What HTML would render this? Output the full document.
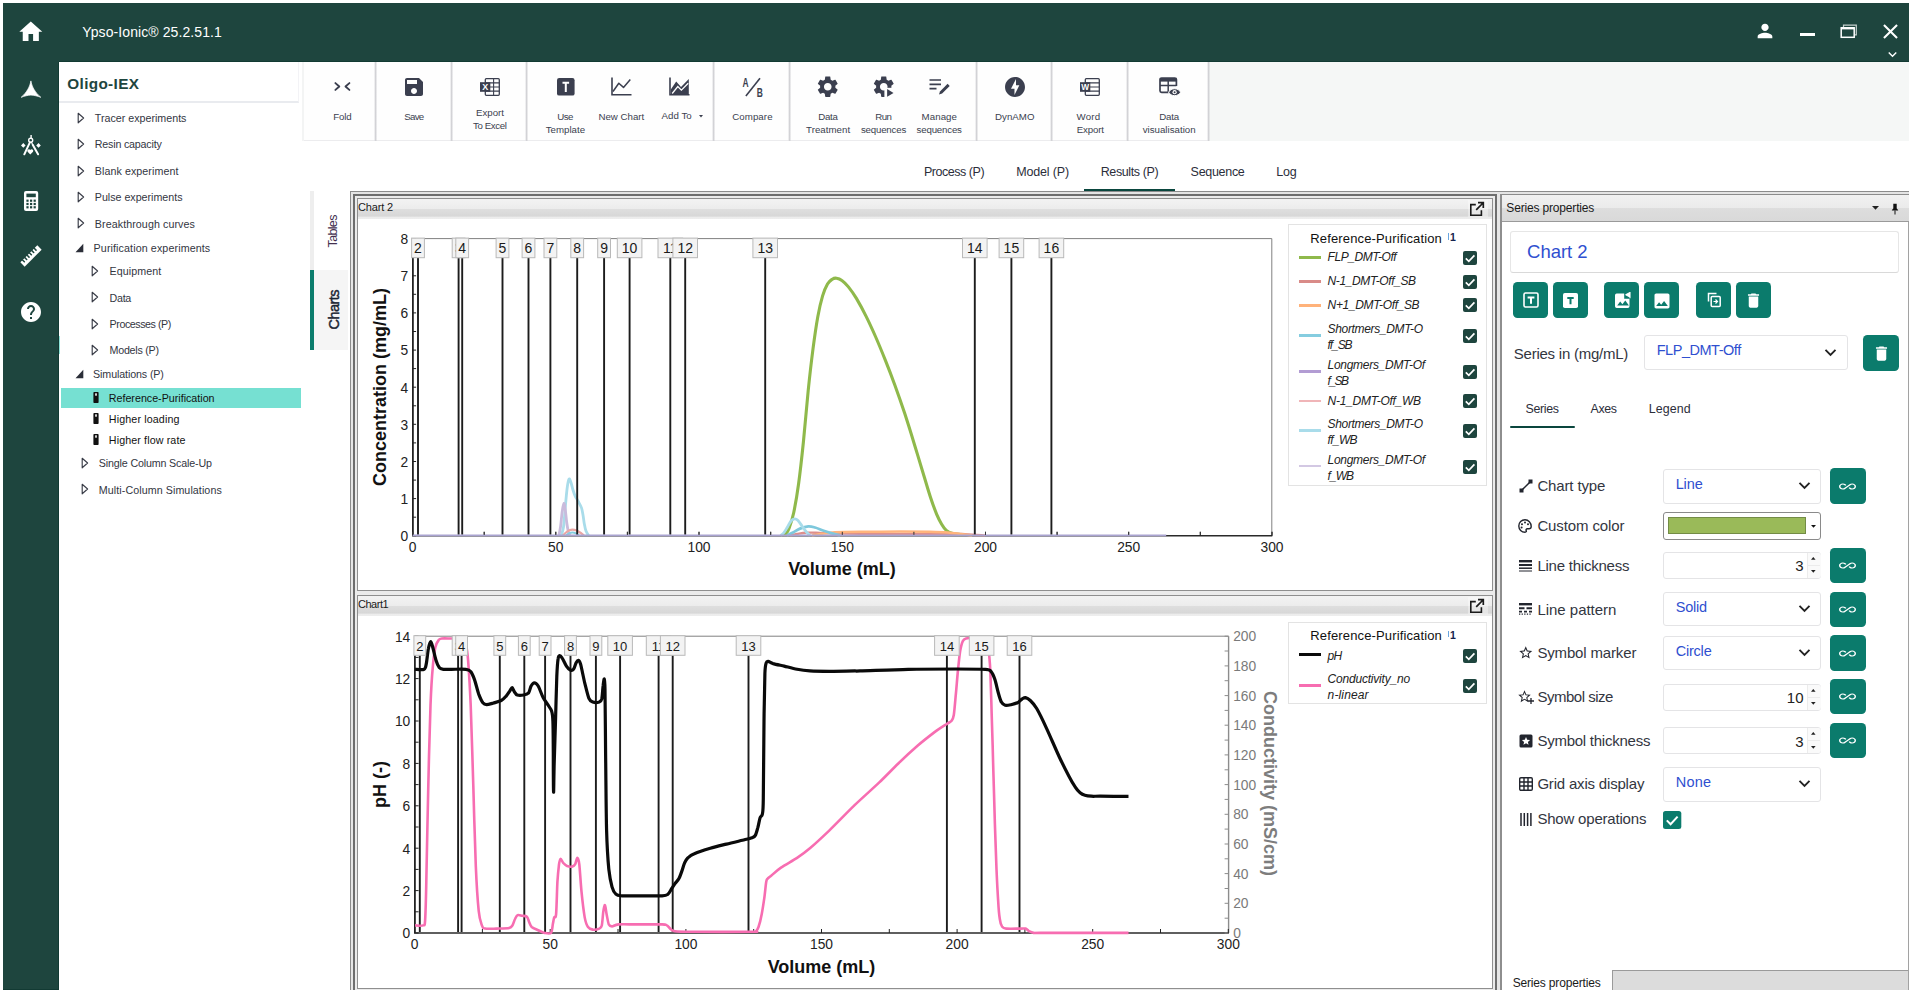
<!DOCTYPE html>
<html lang="en"><head><meta charset="utf-8"><title>Ypso-Ionic</title>
<style>
html,body{margin:0;padding:0;background:#fff;}
body{width:1912px;height:996px;position:relative;overflow:hidden;font-family:"Liberation Sans",sans-serif;}
.a{position:absolute;display:block;}
.t{white-space:nowrap;}
svg{overflow:visible;}
</style></head><body>
<div class="a" style="left:3px;top:3px;width:1906px;height:58.5px;background:#1e453e;border-bottom:1px solid #123a33;box-sizing:border-box;"></div>
<div class="a" style="left:3px;top:3px;width:55.7px;height:987px;background:#1e453e;border-bottom:1px solid #123a33;box-sizing:border-box;"></div>
<div class="a" style="left:57.7px;top:62px;width:1px;height:928px;background:#123a33;"></div>
<div class="a t" style="left:82.30px;top:23.00px;line-height:18px;font-size:14px;color:#fff;letter-spacing:0.091px;">Ypso-Ionic® 25.2.51.1</div>
<svg class="a" style="left:16.9px;top:17.599999999999998px;" width="27.6" height="27.6" viewBox="0 0 24 24"><path fill="#fff" d="M10 20v-6h4v6h5v-8h3L12 3 2 12h3v8z"/></svg>
<svg class="a" style="left:19px;top:78px;" width="24" height="22" viewBox="0 0 24 22"><path fill="#fff" stroke="#fff" stroke-width="0.700" stroke-linejoin="round" d="M11.900 2.900 C12.900 8.500 15.600 14 21.800 19.300 C18 18 15 17.200 11.900 17.100 C8.800 17.200 5.800 18 2.200 19.300 C8.200 14 10.900 8.500 11.900 2.900z"/></svg>
<svg class="a" style="left:19px;top:133px;" width="24" height="26" viewBox="0 0 24 26"><g fill="none" stroke="#fff" stroke-linecap="round"><path d="M10.900 9.300 L5.300 21.300" stroke-width="2"/><path d="M13.700 11.800 L19.100 21.300" stroke-width="2"/><path d="M12.500 9.200L13.700 11.800" stroke-width="1.200"/></g>
<circle cx="11.700" cy="7.200" r="2" fill="none" stroke="#fff" stroke-width="1.400"/><path d="M12.100 2v3.200" stroke="#fff" stroke-width="1.400"/>
<path fill="#fff" d="M4.300 10.100l2.300 2.300-2.300 2.300-2.300-2.300z M19.500 10.100l2.300 2.300-2.300 2.300-2.300-2.300z M11.300 21.500l-2.700-2.700a1.500 1.500 0 0 1 2.700-1.700a1.500 1.500 0 0 1 2.700 1.700z"/></svg>
<svg class="a" style="left:23.7px;top:190.7px;" width="14.2" height="20" viewBox="0 0 14.2 20"><rect x="0" y="0" width="14.200" height="20" rx="2" fill="#fff"/><rect x="2.400" y="2.600" width="9.400" height="3.600" fill="#1e453e"/>
<g fill="#1e453e"><rect x="2.400" y="8.600" width="2.200" height="2.200"/><rect x="6" y="8.600" width="2.200" height="2.200"/><rect x="9.600" y="8.600" width="2.200" height="2.200"/>
<rect x="2.400" y="11.900" width="2.200" height="2.200"/><rect x="6" y="11.900" width="2.200" height="2.200"/><rect x="9.600" y="11.900" width="2.200" height="2.200"/>
<rect x="2.400" y="15.200" width="2.200" height="2.200"/><rect x="6" y="15.200" width="2.200" height="2.200"/><rect x="9.600" y="15.200" width="2.200" height="2.200"/></g></svg>
<svg class="a" style="left:17.85px;top:243.3px;" width="26" height="26" viewBox="0 0 26 26"><g transform="rotate(-45 13 13)"><rect x="1" y="9.950" width="24" height="6.100" fill="#fff"/>
<g stroke="#1e453e" stroke-width="1.500" stroke-linecap="round"><path d="M4.200 9.800v2.600M7.500 9.800v2.600M10.800 9.800v2.600M14.100 9.800v2.600M17.400 9.800v2.600M20.700 9.800v2.600"/></g></g></svg>
<svg class="a" style="left:18.9px;top:299.9px;" width="24" height="24" viewBox="0 0 24 24"><path fill="#fff" d="M12 2C6.48 2 2 6.48 2 12s4.48 10 10 10 10-4.48 10-10S17.52 2 12 2zm1 17h-2v-2h2v2zm2.07-7.75l-.9.92C13.45 12.9 13 13.5 13 15h-2v-.5c0-1.1.45-2.1 1.17-2.83l1.24-1.26c.37-.36.59-.86.59-1.41 0-1.1-.9-2-2-2s-2 .9-2 2H8c0-2.21 1.79-4 4-4s4 1.79 4 4c0 .88-.36 1.68-.93 2.25z"/></svg>
<svg class="a" style="left:1754.0px;top:20.0px;" width="22" height="22" viewBox="0 0 24 24"><path fill="#fff" d="M12 12c2.21 0 4-1.79 4-4s-1.79-4-4-4-4 1.79-4 4 1.79 4 4 4zm0 2c-2.67 0-8 1.34-8 4v2h16v-2c0-2.66-5.33-4-8-4z"/></svg>
<div class="a" style="left:1800px;top:33px;width:15px;height:3px;background:#fff;"></div>
<svg class="a" style="left:1840px;top:22px;" width="18" height="17" viewBox="0 0 18 17"><g fill="none" stroke="#fff"><path d="M3.500 5V3.200H16.300V12.800H14.500" stroke-width="1.200" opacity=".75"/><rect x="1.200" y="5.800" width="13" height="9.500" stroke-width="1.500"/><path d="M1 6.300h13.400" stroke-width="2.200"/></g></svg>
<svg class="a" style="left:1878.0px;top:18.5px;" width="25" height="25" viewBox="0 0 24 24"><path fill="#fff" d="M19 6.41L17.59 5 12 10.59 6.41 5 5 6.41 10.59 12 5 17.59 6.41 19 12 13.41 17.59 19 19 17.59 13.41 12z"/></svg>
<svg class="a" style="left:1883.9px;top:45.5px;" width="17" height="17" viewBox="0 0 24 24"><path fill="#fff" d="M16.59 8.59L12 13.17 7.41 8.59 6 10l6 6 6-6z"/></svg>
<div class="a" style="left:59px;top:62px;width:239px;height:928px;background:#fff;"></div>
<div class="a" style="left:59px;top:62px;width:239.5px;height:40.5px;background:#fff;border-right:1.500px solid #f3f3f6;border-bottom:2px solid #e9ebef;box-sizing:border-box;"></div>
<div class="a t" style="left:67.30px;top:73.60px;line-height:20px;font-size:15.3px;color:#1e453e;font-weight:700;letter-spacing:0.344px;">Oligo-IEX</div>
<div class="a" style="left:58.6px;top:336px;width:1.6px;height:18px;background:#8fe3d8;"></div>
<svg class="a" style="left:76.6px;top:112.0px;" width="8" height="12" viewBox="0 0 8 12"><path d="M1.200 1.200 L6.600 6 L1.200 10.800z" fill="none" stroke="#3a3d48" stroke-width="1.150" stroke-linejoin="round"/></svg>
<div class="a t" style="left:94.80px;top:111.39px;line-height:14px;font-size:10.7px;color:#33363f;">Tracer experiments</div>
<svg class="a" style="left:76.6px;top:138.1px;" width="8" height="12" viewBox="0 0 8 12"><path d="M1.200 1.200 L6.600 6 L1.200 10.800z" fill="none" stroke="#3a3d48" stroke-width="1.150" stroke-linejoin="round"/></svg>
<div class="a t" style="left:94.80px;top:137.49px;line-height:14px;font-size:10.7px;color:#33363f;letter-spacing:-0.191px;">Resin capacity</div>
<svg class="a" style="left:76.6px;top:164.6px;" width="8" height="12" viewBox="0 0 8 12"><path d="M1.200 1.200 L6.600 6 L1.200 10.800z" fill="none" stroke="#3a3d48" stroke-width="1.150" stroke-linejoin="round"/></svg>
<div class="a t" style="left:94.80px;top:163.99px;line-height:14px;font-size:10.7px;color:#33363f;letter-spacing:0.069px;">Blank experiment</div>
<svg class="a" style="left:76.6px;top:191.1px;" width="8" height="12" viewBox="0 0 8 12"><path d="M1.200 1.200 L6.600 6 L1.200 10.800z" fill="none" stroke="#3a3d48" stroke-width="1.150" stroke-linejoin="round"/></svg>
<div class="a t" style="left:94.80px;top:190.49px;line-height:14px;font-size:10.7px;color:#33363f;letter-spacing:-0.013px;">Pulse experiments</div>
<svg class="a" style="left:76.6px;top:217.4px;" width="8" height="12" viewBox="0 0 8 12"><path d="M1.200 1.200 L6.600 6 L1.200 10.800z" fill="none" stroke="#3a3d48" stroke-width="1.150" stroke-linejoin="round"/></svg>
<div class="a t" style="left:94.80px;top:216.79px;line-height:14px;font-size:10.7px;color:#33363f;letter-spacing:0.082px;">Breakthrough curves</div>
<svg class="a" style="left:75.1px;top:242.5px;" width="9" height="10" viewBox="0 0 9 10"><path d="M8.300 0.700 V9.200 H0.500z" fill="#2b2e38"/></svg>
<div class="a t" style="left:93.60px;top:240.69px;line-height:14px;font-size:10.7px;color:#33363f;letter-spacing:0.110px;">Purification experiments</div>
<svg class="a" style="left:91.2px;top:264.8px;" width="8" height="12" viewBox="0 0 8 12"><path d="M1.200 1.200 L6.600 6 L1.200 10.800z" fill="none" stroke="#3a3d48" stroke-width="1.150" stroke-linejoin="round"/></svg>
<div class="a t" style="left:109.60px;top:264.19px;line-height:14px;font-size:10.7px;color:#33363f;letter-spacing:0.081px;">Equipment</div>
<svg class="a" style="left:91.2px;top:291.2px;" width="8" height="12" viewBox="0 0 8 12"><path d="M1.200 1.200 L6.600 6 L1.200 10.800z" fill="none" stroke="#3a3d48" stroke-width="1.150" stroke-linejoin="round"/></svg>
<div class="a t" style="left:109.60px;top:290.59px;line-height:14px;font-size:10.7px;color:#33363f;letter-spacing:-0.300px;">Data</div>
<svg class="a" style="left:91.2px;top:317.6px;" width="8" height="12" viewBox="0 0 8 12"><path d="M1.200 1.200 L6.600 6 L1.200 10.800z" fill="none" stroke="#3a3d48" stroke-width="1.150" stroke-linejoin="round"/></svg>
<div class="a t" style="left:109.60px;top:316.99px;line-height:14px;font-size:10.7px;color:#33363f;letter-spacing:-0.449px;">Processes (P)</div>
<svg class="a" style="left:91.2px;top:343.9px;" width="8" height="12" viewBox="0 0 8 12"><path d="M1.200 1.200 L6.600 6 L1.200 10.800z" fill="none" stroke="#3a3d48" stroke-width="1.150" stroke-linejoin="round"/></svg>
<div class="a t" style="left:109.60px;top:343.29px;line-height:14px;font-size:10.7px;color:#33363f;letter-spacing:-0.258px;">Models (P)</div>
<svg class="a" style="left:75.1px;top:369px;" width="9" height="10" viewBox="0 0 9 10"><path d="M8.300 0.700 V9.200 H0.500z" fill="#2b2e38"/></svg>
<div class="a t" style="left:93.10px;top:367.19px;line-height:14px;font-size:10.7px;color:#33363f;letter-spacing:-0.117px;">Simulations (P)</div>
<div class="a" style="left:61px;top:387.7px;width:240px;height:20.7px;background:#76e0d2;"></div>
<svg class="a" style="left:92.6px;top:392.2px;" width="6" height="11" viewBox="0 0 6 11"><rect x="0.400" y="0" width="5.200" height="11" rx="0.800" fill="#111"/><rect x="2.200" y="1.300" width="1.600" height="2.400" fill="#fff"/></svg>
<div class="a t" style="left:108.80px;top:391.29px;line-height:14px;font-size:10.7px;color:#111;">Reference-Purification</div>
<svg class="a" style="left:92.6px;top:413.1px;" width="6" height="11" viewBox="0 0 6 11"><rect x="0.400" y="0" width="5.200" height="11" rx="0.800" fill="#111"/><rect x="2.200" y="1.300" width="1.600" height="2.400" fill="#fff"/></svg>
<div class="a t" style="left:108.80px;top:412.19px;line-height:14px;font-size:10.7px;color:#111;letter-spacing:0.131px;">Higher loading</div>
<svg class="a" style="left:92.6px;top:433.8px;" width="6" height="11" viewBox="0 0 6 11"><rect x="0.400" y="0" width="5.200" height="11" rx="0.800" fill="#111"/><rect x="2.200" y="1.300" width="1.600" height="2.400" fill="#fff"/></svg>
<div class="a t" style="left:108.80px;top:432.89px;line-height:14px;font-size:10.7px;color:#111;letter-spacing:0.118px;">Higher flow rate</div>
<svg class="a" style="left:81.1px;top:457.0px;" width="8" height="12" viewBox="0 0 8 12"><path d="M1.200 1.200 L6.600 6 L1.200 10.800z" fill="none" stroke="#3a3d48" stroke-width="1.150" stroke-linejoin="round"/></svg>
<div class="a t" style="left:98.80px;top:456.39px;line-height:14px;font-size:10.7px;color:#33363f;letter-spacing:-0.155px;">Single Column Scale-Up</div>
<svg class="a" style="left:81.1px;top:483.3px;" width="8" height="12" viewBox="0 0 8 12"><path d="M1.200 1.200 L6.600 6 L1.200 10.800z" fill="none" stroke="#3a3d48" stroke-width="1.150" stroke-linejoin="round"/></svg>
<div class="a t" style="left:98.80px;top:482.69px;line-height:14px;font-size:10.7px;color:#33363f;letter-spacing:0.078px;">Multi-Column Simulations</div>
<div class="a" style="left:302px;top:61.5px;width:1607px;height:79.5px;background:#f5f7f6;"></div>
<div class="a" style="left:303.5px;top:61.5px;width:905px;height:79px;background:#fefefe;border-bottom:1px solid #ececee;box-sizing:border-box;"></div>
<div class="a" style="left:374.2px;top:62px;width:3px;height:78.5px;background:linear-gradient(90deg,rgba(0,0,0,0) 0,#dddde0 35%,#cbcbcf 60%,rgba(0,0,0,0) 100%);"></div>
<div class="a" style="left:449.7px;top:62px;width:3px;height:78.5px;background:linear-gradient(90deg,rgba(0,0,0,0) 0,#dddde0 35%,#cbcbcf 60%,rgba(0,0,0,0) 100%);"></div>
<div class="a" style="left:525.1px;top:62px;width:3px;height:78.5px;background:linear-gradient(90deg,rgba(0,0,0,0) 0,#dddde0 35%,#cbcbcf 60%,rgba(0,0,0,0) 100%);"></div>
<div class="a" style="left:712.1px;top:62px;width:3px;height:78.5px;background:linear-gradient(90deg,rgba(0,0,0,0) 0,#dddde0 35%,#cbcbcf 60%,rgba(0,0,0,0) 100%);"></div>
<div class="a" style="left:787.7px;top:62px;width:3px;height:78.5px;background:linear-gradient(90deg,rgba(0,0,0,0) 0,#dddde0 35%,#cbcbcf 60%,rgba(0,0,0,0) 100%);"></div>
<div class="a" style="left:974.6px;top:62px;width:3px;height:78.5px;background:linear-gradient(90deg,rgba(0,0,0,0) 0,#dddde0 35%,#cbcbcf 60%,rgba(0,0,0,0) 100%);"></div>
<div class="a" style="left:1049.9px;top:62px;width:3px;height:78.5px;background:linear-gradient(90deg,rgba(0,0,0,0) 0,#dddde0 35%,#cbcbcf 60%,rgba(0,0,0,0) 100%);"></div>
<div class="a" style="left:1125.7px;top:62px;width:3px;height:78.5px;background:linear-gradient(90deg,rgba(0,0,0,0) 0,#dddde0 35%,#cbcbcf 60%,rgba(0,0,0,0) 100%);"></div>
<div class="a" style="left:1206.9px;top:62px;width:3px;height:78.5px;background:linear-gradient(90deg,rgba(0,0,0,0) 0,#dddde0 35%,#cbcbcf 60%,rgba(0,0,0,0) 100%);"></div>
<div class="a" style="left:302px;top:62px;width:1.6px;height:78.5px;background:#f3f4f4;"></div>
<div class="a t" style="left:333.15px;top:109.66px;line-height:13px;font-size:9.7px;color:#3b3f4f;letter-spacing:-0.123px;">Fold</div>
<div class="a t" style="left:404.15px;top:109.66px;line-height:13px;font-size:9.7px;color:#3b3f4f;letter-spacing:-0.669px;">Save</div>
<div class="a t" style="left:476.00px;top:105.86px;line-height:13px;font-size:9.7px;color:#3b3f4f;letter-spacing:-0.007px;">Export</div>
<div class="a t" style="left:472.95px;top:119.16px;line-height:13px;font-size:9.7px;color:#3b3f4f;letter-spacing:-0.365px;">To Excel</div>
<div class="a t" style="left:557.30px;top:109.76px;line-height:13px;font-size:9.7px;color:#3b3f4f;letter-spacing:-0.525px;">Use</div>
<div class="a t" style="left:545.70px;top:122.86px;line-height:13px;font-size:9.7px;color:#3b3f4f;letter-spacing:0.006px;">Template</div>
<div class="a t" style="left:598.45px;top:109.66px;line-height:13px;font-size:9.7px;color:#3b3f4f;letter-spacing:0.010px;">New Chart</div>
<div class="a t" style="left:661.40px;top:109.16px;line-height:13px;font-size:9.7px;color:#3b3f4f;letter-spacing:0.076px;">Add To</div>
<svg class="a" style="left:698.5px;top:114.6px;" width="4" height="3" viewBox="0 0 4 3"><path d="M0 0h4L2 2.600z" fill="#3b3f4f"/></svg>
<div class="a t" style="left:732.20px;top:109.66px;line-height:13px;font-size:9.7px;color:#3b3f4f;letter-spacing:0.085px;">Compare</div>
<div class="a t" style="left:818.20px;top:109.76px;line-height:13px;font-size:9.7px;color:#3b3f4f;letter-spacing:-0.229px;">Data</div>
<div class="a t" style="left:806.05px;top:122.86px;line-height:13px;font-size:9.7px;color:#3b3f4f;letter-spacing:0.032px;">Treatment</div>
<div class="a t" style="left:875.20px;top:109.76px;line-height:13px;font-size:9.7px;color:#3b3f4f;letter-spacing:-0.497px;">Run</div>
<div class="a t" style="left:860.90px;top:122.86px;line-height:13px;font-size:9.7px;color:#3b3f4f;letter-spacing:-0.189px;">sequences</div>
<div class="a t" style="left:921.60px;top:109.76px;line-height:13px;font-size:9.7px;color:#3b3f4f;letter-spacing:0.070px;">Manage</div>
<div class="a t" style="left:916.60px;top:122.86px;line-height:13px;font-size:9.7px;color:#3b3f4f;letter-spacing:-0.189px;">sequences</div>
<div class="a t" style="left:995.05px;top:109.66px;line-height:13px;font-size:9.7px;color:#3b3f4f;letter-spacing:0.031px;">DynAMO</div>
<div class="a t" style="left:1076.60px;top:109.76px;line-height:13px;font-size:9.7px;color:#3b3f4f;letter-spacing:0.201px;">Word</div>
<div class="a t" style="left:1076.75px;top:122.86px;line-height:13px;font-size:9.7px;color:#3b3f4f;letter-spacing:-0.147px;">Export</div>
<div class="a t" style="left:1159.20px;top:109.76px;line-height:13px;font-size:9.7px;color:#3b3f4f;letter-spacing:-0.163px;">Data</div>
<div class="a t" style="left:1142.70px;top:122.86px;line-height:13px;font-size:9.7px;color:#3b3f4f;letter-spacing:0.014px;">visualisation</div>
<svg class="a" style="left:333px;top:81px;" width="19" height="11" viewBox="0 0 19 11"><g fill="none" stroke="#3b3f4f" stroke-width="1.900" stroke-linecap="round" stroke-linejoin="round"><path d="M2.400 2.100L6.300 5.500 2.400 8.900"/><path d="M16.400 2.100L12.500 5.500 16.400 8.900"/></g></svg>
<svg class="a" style="left:402.2px;top:74.5px;" width="24" height="24" viewBox="0 0 24 24"><path fill="#3b3f4f" d="M17 3H5c-1.110 0-2 .9-2 2v14c0 1.100.890 2 2 2h14c1.100 0 2-.9 2-2V7l-4-4zm-5 16c-1.660 0-3-1.340-3-3s1.340-3 3-3 3 1.340 3 3-1.340 3-3 3zm3-10H5V5h10v4z"/></svg>
<svg class="a" style="left:480px;top:77.5px;" width="20" height="18" viewBox="0 0 20 18"><rect x="5.300" y="0.700" width="14" height="16.600" rx="1" fill="#fff" stroke="#3b3f4f" stroke-width="1.300"/>
<g stroke="#3b3f4f" stroke-width="1.100"><path d="M5.300 4.900h14M5.300 9h14M5.300 13.100h14"/><path d="M13.600 0.700v16.600"/></g>
<rect x="0" y="4.200" width="10.300" height="9.600" fill="#3b3f4f"/>
<text x="5.150" y="12.300" font-family="Liberation Sans, sans-serif" font-weight="700" font-size="9" text-anchor="middle" fill="#fff">X</text></svg>
<svg class="a" style="left:556.6px;top:77.7px;" width="17.6" height="17.6" viewBox="0 0 17.6 17.6"><rect width="17.600" height="17.600" rx="2.200" fill="#3b3f4f"/><path d="M5.500 3.700h6.600v2h-2.300v8.200h-2V5.700H5.500z" fill="#fff"/></svg>
<svg class="a" style="left:611px;top:77px;" width="21" height="19" viewBox="0 0 21 19"><g fill="none" stroke="#3b3f4f" stroke-width="1.500"><path d="M1 0.500V17.800H20.500" stroke-width="1.600"/><path d="M2 14.500L7.800 6.200 12.500 10.400 19.300 2.400" stroke-linejoin="round"/></g></svg>
<svg class="a" style="left:669px;top:77px;" width="21" height="19" viewBox="0 0 21 19"><path d="M1 0.500V17.800H20.500" fill="none" stroke="#3b3f4f" stroke-width="1.600"/><path d="M1.800 17.800V12.500L7.200 4.500l4.800 5.400 7.800-8V17.800z" fill="#3b3f4f"/><path d="M3.200 16.500L8.800 9.500l3.600 3.600 6.800-6.800" fill="none" stroke="#fefefe" stroke-width="1.300"/></svg>
<svg class="a" style="left:741.5px;top:75.5px;" width="22" height="22" viewBox="0 0 22 22"><path d="M3.900 19.900L18 2.300" stroke="#3b3f4f" stroke-width="1.600" fill="none"/>
<text transform="translate(0.600,10.800) scale(0.640,1)" font-family="Liberation Sans, sans-serif" font-weight="700" font-size="13.200" fill="#3b3f4f">A</text>
<text transform="translate(14.700,20.800) scale(0.640,1)" font-family="Liberation Sans, sans-serif" font-weight="700" font-size="13.200" fill="#3b3f4f">B</text></svg>
<svg class="a" style="left:815.35px;top:73.75px;" width="25.5" height="25.5" viewBox="0 0 24 24"><path fill="#3b3f4f" d="M19.140 12.940c.040-.300.060-.610.060-.940 0-.320-.020-.640-.070-.940l2.030-1.580c.180-.140.230-.410.120-.610l-1.920-3.320c-.120-.220-.370-.290-.590-.220l-2.390.960c-.500-.380-1.030-.700-1.620-.940l-.360-2.540c-.040-.240-.240-.410-.480-.410h-3.840c-.240 0-.430.170-.470.410l-.360 2.540c-.590.240-1.130.570-1.620.940l-2.390-.960c-.220-.080-.470 0-.590.220L2.740 8.870c-.120.210-.080.470.120.610l2.030 1.580c-.050.300-.090.630-.090.940s.020.640.070.940l-2.030 1.580c-.180.140-.230.410-.120.610l1.920 3.320c.120.220.370.290.590.220l2.390-.960c.500.380 1.030.700 1.620.940l.360 2.540c.050.240.240.410.480.410h3.840c.240 0 .440-.170.470-.410l.360-2.540c.590-.240 1.130-.560 1.620-.940l2.390.960c.220.080.470 0 .590-.220l1.920-3.320c.120-.220.070-.470-.120-.610l-2.010-1.580zM12 15.600c-1.980 0-3.600-1.620-3.600-3.600s1.620-3.600 3.600-3.600 3.600 1.620 3.600 3.600-1.620 3.600-3.600 3.600z"/></svg>
<svg class="a" style="left:870.85px;top:73.75px;" width="25.5" height="25.5" viewBox="0 0 24 24"><path fill="#3b3f4f" d="M19.140 12.940c.040-.300.060-.610.060-.940 0-.320-.020-.640-.070-.940l2.030-1.580c.180-.140.230-.410.120-.610l-1.920-3.320c-.120-.220-.370-.290-.590-.220l-2.390.960c-.500-.380-1.030-.700-1.620-.940l-.360-2.540c-.040-.240-.240-.410-.480-.410h-3.840c-.240 0-.430.170-.470.410l-.360 2.540c-.590.240-1.130.570-1.620.940l-2.390-.960c-.220-.080-.470 0-.590.220L2.740 8.870c-.120.210-.080.470.120.610l2.030 1.580c-.050.300-.090.630-.090.940s.020.640.070.940l-2.030 1.580c-.180.140-.230.410-.120.610l1.920 3.320c.120.220.370.290.590.220l2.390-.960c.500.380 1.030.700 1.620.940l.360 2.540c.050.240.240.410.480.410h3.840c.240 0 .440-.170.470-.410l.360-2.540c.590-.240 1.130-.560 1.620-.940l2.390.960c.220.080.470 0 .590-.220l1.920-3.320c.120-.220.070-.470-.120-.610l-2.010-1.580zM12 15.600c-1.980 0-3.600-1.620-3.600-3.600s1.620-3.600 3.600-3.600 3.600 1.620 3.600 3.600-1.620 3.600-3.600 3.600z"/><rect x="12.600" y="13" width="11" height="10" fill="#fefefe"/><path d="M15.200 14.200v7.200l6-3.600z" fill="#3b3f4f"/></svg>
<svg class="a" style="left:929px;top:78px;" width="21" height="17" viewBox="0 0 21 17"><g stroke="#3b3f4f" stroke-width="1.700" fill="none"><path d="M0.500 2h11.500M0.500 6.300h11.500M0.500 10.600h7"/></g><path d="M10 16.600l1-3.200 7.600-7.600 2.100 2.100-7.600 7.600z" fill="#3b3f4f"/></svg>
<svg class="a" style="left:1002.8px;top:74.5px;" width="24" height="24" viewBox="0 0 24 24"><path fill="#3b3f4f" d="M12 2.020c-5.510 0-9.980 4.470-9.980 9.980s4.470 9.980 9.980 9.980 9.980-4.470 9.980-9.980S17.510 2.020 12 2.020zM11.480 20v-6.260H8L13 4v6.260h3.350L11.480 20z"/></svg>
<svg class="a" style="left:1080.4px;top:77.5px;" width="20" height="18" viewBox="0 0 20 18"><rect x="5.300" y="0.700" width="14" height="16.600" rx="1" fill="#fff" stroke="#3b3f4f" stroke-width="1.300"/>
<g stroke="#3b3f4f" stroke-width="1.100"><path d="M5.300 4.900h14M5.300 9h14M5.300 13.100h14"/></g>
<rect x="0" y="4.200" width="10.300" height="9.600" fill="#3b3f4f"/>
<text x="5.150" y="12.300" font-family="Liberation Sans, sans-serif" font-weight="700" font-size="8.3" text-anchor="middle" fill="#fff">W</text></svg>
<svg class="a" style="left:1159px;top:77px;" width="22" height="20" viewBox="0 0 22 20"><path d="M9.500 15.300H2.600a1.600 1.600 0 0 1-1.600-1.600V2.600A1.600 1.600 0 0 1 2.600 1H15.800a1.600 1.600 0 0 1 1.600 1.600V9" fill="none" stroke="#3b3f4f" stroke-width="1.700"/>
<rect x="1" y="1" width="16.400" height="3.600" fill="#3b3f4f"/><path d="M1 8.600h16.400M9.200 4v11" stroke="#3b3f4f" stroke-width="1.500"/>
<path d="M9.600 15.200c2.200-4.600 9.800-4.600 12 0c-2.200 4.600-9.800 4.600-12 0z" fill="#3b3f4f" stroke="#fefefe" stroke-width="1"/><circle cx="15.600" cy="15.200" r="2.100" fill="#fefefe"/><circle cx="15.600" cy="15.200" r="1" fill="#3b3f4f"/></svg>
<div class="a t" style="left:924.00px;top:163.70px;line-height:16px;font-size:12.5px;color:#2b2e3a;letter-spacing:-0.469px;">Process (P)</div>
<div class="a t" style="left:1016.35px;top:163.70px;line-height:16px;font-size:12.5px;color:#2b2e3a;letter-spacing:-0.185px;">Model (P)</div>
<div class="a t" style="left:1100.70px;top:163.70px;line-height:16px;font-size:12.5px;color:#2b2e3a;letter-spacing:-0.381px;">Results (P)</div>
<div class="a t" style="left:1190.60px;top:163.70px;line-height:16px;font-size:12.5px;color:#2b2e3a;letter-spacing:-0.299px;">Sequence</div>
<div class="a t" style="left:1276.25px;top:163.70px;line-height:16px;font-size:12.5px;color:#2b2e3a;letter-spacing:-0.177px;">Log</div>
<div class="a" style="left:1084.3px;top:188.8px;width:90.4px;height:2.2px;background:#0a463e;"></div>
<div class="a" style="left:310.3px;top:191px;width:3.8px;height:79px;background:#eeeeee;"></div>
<div class="a" style="left:310.3px;top:270px;width:3.8px;height:80px;background:#0b7d6d;"></div>
<div class="a" style="left:314.1px;top:270px;width:33.9px;height:80px;background:#f5f5f5;"></div>
<div class="a t" style="left:317.00px;top:222.50px;width:32.80px;line-height:16px;font-size:12.5px;color:#43304f;letter-spacing:-0.666px;transform:rotate(-90deg);transform-origin:50% 50%;">Tables</div>
<div class="a t" style="left:313.60px;top:300.20px;width:40.00px;line-height:19px;font-size:14.5px;color:#1b2533;letter-spacing:-0.541px;transform:rotate(-90deg);transform-origin:50% 50%;-webkit-text-stroke:0.450px #1b2533;">Charts</div>
<div class="a" style="left:350px;top:191px;width:1559px;height:3px;background:#e4e4e4;border-top:1px solid #8c8c8c;border-left:1px solid #8c8c8c;box-sizing:border-box;"></div>
<div class="a" style="left:350px;top:194px;width:1152px;height:796px;background:#e6e6e6;border-left:1px solid #8c8c8c;box-sizing:border-box;"></div>
<div class="a" style="left:353px;top:194px;width:1144px;height:796px;background:#6e6e6e;"></div>
<div class="a" style="left:355px;top:196px;width:1140px;height:794px;background:#ebebeb;"></div>
<div class="a" style="left:1500.2px;top:194px;width:1.8px;height:796px;background:#8e8e8e;"></div>
<div class="a" style="left:357px;top:198px;width:1136px;height:393px;background:#fff;border:1px solid #8f8f8f;box-sizing:border-box;"></div>
<div class="a" style="left:358px;top:199px;width:1134px;height:19.6px;background:linear-gradient(#f3f3f3 0,#ececec 50%,#dedede 52%,#d7d7d7 86%,#ececec 90%,#ededed 100%);"></div>
<div class="a t" style="left:358.00px;top:200.10px;line-height:14px;font-size:11px;color:#1a1a1a;letter-spacing:-0.178px;">Chart 2</div>
<div class="a" style="left:1467.5px;top:200px;width:20.5px;height:17px;background:rgba(255,255,255,.35);"></div>
<svg class="a" style="left:1468.7px;top:201px;" width="16" height="16" viewBox="0 0 16 16"><g fill="none" stroke="#1b1b1b" stroke-width="1.600"><path d="M6.800 3.600H1.800V14.200H12.400V9.200"/><path d="M7.200 8.800L14 2M9 1.700h5.300v5.300" stroke-width="1.700"/></g></svg>
<div class="a" style="left:357px;top:595px;width:1136px;height:394px;background:#fff;border:1px solid #8f8f8f;box-sizing:border-box;"></div>
<div class="a" style="left:358px;top:596px;width:1134px;height:19.6px;background:linear-gradient(#f3f3f3 0,#ececec 50%,#dedede 52%,#d7d7d7 86%,#ececec 90%,#ededed 100%);"></div>
<div class="a t" style="left:358.00px;top:597.10px;line-height:14px;font-size:11px;color:#1a1a1a;letter-spacing:-0.483px;">Chart1</div>
<div class="a" style="left:1467.5px;top:597px;width:20.5px;height:17px;background:rgba(255,255,255,.35);"></div>
<svg class="a" style="left:1468.7px;top:598px;" width="16" height="16" viewBox="0 0 16 16"><g fill="none" stroke="#1b1b1b" stroke-width="1.600"><path d="M6.800 3.600H1.800V14.200H12.400V9.200"/><path d="M7.200 8.800L14 2M9 1.700h5.300v5.300" stroke-width="1.700"/></g></svg>
<svg class="a" style="left:358px;top:219px" width="1134" height="371" viewBox="358 219 1134 371"><path d="M412.6 238.6H1271.8V535.8" fill="none" stroke="#808080" stroke-width="1"/><path d="M412.90000000000003 238.6V535.8" stroke="#222" stroke-width="1.800"/><path d="M412.0 535.8H1272.3" stroke="#2a2a2a" stroke-width="1.600"/><path d="M412.6 535.8h3.500" stroke="#222" stroke-width="1"/><path d="M412.6 517.2h3.500" stroke="#222" stroke-width="1"/><path d="M412.6 498.6h3.500" stroke="#222" stroke-width="1"/><path d="M412.6 480.1h3.500" stroke="#222" stroke-width="1"/><path d="M412.6 461.5h3.500" stroke="#222" stroke-width="1"/><path d="M412.6 442.9h3.500" stroke="#222" stroke-width="1"/><path d="M412.6 424.3h3.500" stroke="#222" stroke-width="1"/><path d="M412.6 405.8h3.500" stroke="#222" stroke-width="1"/><path d="M412.6 387.2h3.500" stroke="#222" stroke-width="1"/><path d="M412.6 368.6h3.500" stroke="#222" stroke-width="1"/><path d="M412.6 350.1h3.500" stroke="#222" stroke-width="1"/><path d="M412.6 331.5h3.500" stroke="#222" stroke-width="1"/><path d="M412.6 312.9h3.500" stroke="#222" stroke-width="1"/><path d="M412.6 294.3h3.500" stroke="#222" stroke-width="1"/><path d="M412.6 275.8h3.500" stroke="#222" stroke-width="1"/><path d="M412.6 257.2h3.500" stroke="#222" stroke-width="1"/><path d="M412.6 238.6h3.500" stroke="#222" stroke-width="1"/><path d="M412.6 535.8v-4" stroke="#222" stroke-width="1"/><path d="M484.2 535.8v-4" stroke="#222" stroke-width="1"/><path d="M555.8 535.8v-4" stroke="#222" stroke-width="1"/><path d="M627.4 535.8v-4" stroke="#222" stroke-width="1"/><path d="M699.0 535.8v-4" stroke="#222" stroke-width="1"/><path d="M770.7 535.8v-4" stroke="#222" stroke-width="1"/><path d="M842.3 535.8v-4" stroke="#222" stroke-width="1"/><path d="M913.9 535.8v-4" stroke="#222" stroke-width="1"/><path d="M985.5 535.8v-4" stroke="#222" stroke-width="1"/><path d="M1057.1 535.8v-4" stroke="#222" stroke-width="1"/><path d="M1128.7 535.8v-4" stroke="#222" stroke-width="1"/><path d="M1200.3 535.8v-4" stroke="#222" stroke-width="1"/><path d="M1272.0 535.8v-4" stroke="#222" stroke-width="1"/><text x="408.3" y="541.1" font-family="Liberation Sans, sans-serif" font-size="13.800" text-anchor="end" fill="#222">0</text><text x="408.3" y="503.9" font-family="Liberation Sans, sans-serif" font-size="13.800" text-anchor="end" fill="#222">1</text><text x="408.3" y="466.8" font-family="Liberation Sans, sans-serif" font-size="13.800" text-anchor="end" fill="#222">2</text><text x="408.3" y="429.6" font-family="Liberation Sans, sans-serif" font-size="13.800" text-anchor="end" fill="#222">3</text><text x="408.3" y="392.5" font-family="Liberation Sans, sans-serif" font-size="13.800" text-anchor="end" fill="#222">4</text><text x="408.3" y="355.4" font-family="Liberation Sans, sans-serif" font-size="13.800" text-anchor="end" fill="#222">5</text><text x="408.3" y="318.2" font-family="Liberation Sans, sans-serif" font-size="13.800" text-anchor="end" fill="#222">6</text><text x="408.3" y="281.1" font-family="Liberation Sans, sans-serif" font-size="13.800" text-anchor="end" fill="#222">7</text><text x="408.3" y="243.9" font-family="Liberation Sans, sans-serif" font-size="13.800" text-anchor="end" fill="#222">8</text><text x="412.6" y="552.200" font-family="Liberation Sans, sans-serif" font-size="13.800" text-anchor="middle" fill="#222">0</text><text x="555.8" y="552.200" font-family="Liberation Sans, sans-serif" font-size="13.800" text-anchor="middle" fill="#222">50</text><text x="699.0" y="552.200" font-family="Liberation Sans, sans-serif" font-size="13.800" text-anchor="middle" fill="#222">100</text><text x="842.3" y="552.200" font-family="Liberation Sans, sans-serif" font-size="13.800" text-anchor="middle" fill="#222">150</text><text x="985.5" y="552.200" font-family="Liberation Sans, sans-serif" font-size="13.800" text-anchor="middle" fill="#222">200</text><text x="1128.7" y="552.200" font-family="Liberation Sans, sans-serif" font-size="13.800" text-anchor="middle" fill="#222">250</text><text x="1272.0" y="552.200" font-family="Liberation Sans, sans-serif" font-size="13.800" text-anchor="middle" fill="#222">300</text><text x="842" y="575" font-family="Liberation Sans, sans-serif" font-size="18" font-weight="700" text-anchor="middle" fill="#111">Volume (mL)</text><text transform="translate(386,387) rotate(-90)" font-family="Liberation Sans, sans-serif" font-size="18" font-weight="700" text-anchor="middle" fill="#111">Concentration (mg/mL)</text><path d="M782.5 535.0C783.1 534.8 784.9 534.6 786.0 533.6C787.1 532.6 787.6 532.3 788.9 528.8C790.2 525.3 792.1 520.2 793.7 512.7C795.3 505.2 797.0 495.6 798.6 483.8C800.2 472.0 801.8 457.5 803.4 442.0C805.0 426.5 806.6 406.1 808.2 390.6C809.8 375.1 811.4 361.2 813.0 348.9C814.6 336.6 816.2 325.5 817.8 316.7C819.4 307.9 821.0 301.3 822.6 295.9C824.2 290.4 825.9 286.8 827.5 284.0C829.1 281.2 830.8 280.2 832.3 279.2C833.8 278.2 834.9 278.0 836.5 278.2C838.1 278.4 839.9 278.9 841.9 280.4C843.9 281.8 846.0 283.9 848.4 286.9C850.8 289.9 853.5 293.5 856.4 298.4C859.3 303.3 862.8 309.7 866.0 316.1C869.2 322.5 872.5 329.7 875.7 337.0C878.9 344.3 882.1 352.1 885.3 360.1C888.5 368.1 891.7 376.4 894.9 385.2C898.1 394.0 901.4 403.4 904.6 413.1C907.8 422.9 911.0 433.2 914.2 443.7C917.4 454.1 921.2 467.0 923.9 475.8C926.6 484.6 928.2 490.3 930.3 496.7C932.4 503.1 934.8 509.7 936.7 514.3C938.6 518.8 939.9 521.3 941.5 524.0C943.1 526.7 944.4 528.8 946.3 530.4C948.2 532.0 950.1 532.9 952.8 533.6C955.5 534.3 960.8 534.6 962.4 534.8" fill="none" stroke="#8fb94b" stroke-width="3.100" stroke-linejoin="round"/><path d="M561.2 535.4C561.6 534.0 562.8 532.1 563.5 527.0C564.2 521.9 564.9 511.7 565.5 505.0C566.1 498.3 566.7 491.3 567.3 487.0C567.9 482.7 568.4 479.8 569.0 479.0C569.6 478.2 570.1 480.2 570.8 482.0C571.5 483.8 572.3 487.6 573.0 490.0C573.7 492.4 574.4 494.3 575.2 496.1C576.0 497.9 577.0 499.0 578.0 501.0C579.0 503.0 580.7 505.6 581.5 507.9C582.3 510.2 582.5 512.5 583.0 515.0C583.5 517.5 583.7 520.5 584.2 523.2C584.7 525.9 585.2 529.0 586.0 531.0C586.8 533.0 588.2 534.7 588.7 535.4" fill="none" stroke="#a9dcea" stroke-width="2.800" stroke-linejoin="round"/><path d="M558.9 535.4C559.2 534.0 559.9 531.1 560.5 527.0C561.1 522.9 561.7 514.9 562.3 511.0C562.9 507.1 563.4 503.6 563.9 503.4C564.4 503.2 564.8 506.7 565.3 510.0C565.8 513.3 566.3 519.5 566.8 523.0C567.3 526.5 567.7 528.9 568.2 531.0C568.7 533.1 569.5 534.7 569.7 535.4" fill="none" stroke="#c9bbdc" stroke-width="2.800" stroke-linejoin="round"/><path d="M563.0 535.4C563.5 534.9 564.9 533.4 566.0 532.5C567.1 531.6 568.4 530.8 569.5 530.3C570.6 529.8 571.4 529.6 572.5 529.6C573.6 529.6 574.8 529.8 576.0 530.3C577.2 530.8 578.7 531.6 580.0 532.5C581.3 533.4 583.3 534.9 584.0 535.4" fill="none" stroke="#eaa6a4" stroke-width="2.200"/><path d="M566.0 535.4C566.5 535.0 567.9 533.8 569.0 533.3C570.1 532.8 571.3 532.4 572.5 532.4C573.7 532.4 574.9 532.8 576.0 533.3C577.1 533.8 578.5 535.0 579.0 535.4" fill="none" stroke="#85cde0" stroke-width="2"/><path d="M790.0 535.4C791.2 535.2 794.3 534.4 797.0 534.0C799.7 533.6 802.8 533.0 806.0 532.8C809.2 532.6 812.0 532.6 816.0 532.7C820.0 532.8 819.3 533.2 830.0 533.4C840.7 533.6 860.8 533.9 880.0 534.0C899.2 534.1 930.8 533.8 945.0 533.8C959.2 533.8 958.3 533.9 965.0 534.2C971.7 534.5 981.7 535.2 985.0 535.4" fill="none" stroke="#dd8f8c" stroke-width="2.400"/><path d="M812.0 535.4C813.7 535.1 818.2 534.3 822.0 533.8C825.8 533.3 828.7 532.6 835.0 532.3C841.3 532.0 849.2 531.9 860.0 531.8C870.8 531.7 888.3 531.6 900.0 531.6C911.7 531.6 922.0 531.6 930.0 531.8C938.0 532.0 943.0 532.2 948.0 532.6C953.0 533.0 956.0 533.5 960.0 534.0C964.0 534.5 970.0 535.2 972.0 535.4" fill="none" stroke="#ffb47c" stroke-width="2.500"/><path d="M787.0 535.4C788.0 534.9 790.8 533.6 793.0 532.5C795.2 531.4 797.5 529.6 800.0 528.6C802.5 527.6 805.8 526.6 808.3 526.4C810.8 526.2 812.5 526.8 815.0 527.5C817.5 528.2 820.2 529.5 823.0 530.5C825.8 531.5 829.2 532.5 832.0 533.3C834.8 534.1 838.7 535.0 840.0 535.4" fill="none" stroke="#7ec8dc" stroke-width="2.800"/><path d="M780.7 535.4C781.2 534.9 782.9 533.9 784.0 532.5C785.1 531.1 786.3 528.9 787.5 527.0C788.7 525.1 789.8 522.4 791.0 521.0C792.2 519.6 793.3 519.0 794.5 518.9C795.7 518.8 796.8 519.3 798.0 520.5C799.2 521.7 800.7 524.2 802.0 526.0C803.3 527.8 804.7 529.9 806.0 531.5C807.3 533.1 809.3 534.8 810.0 535.4" fill="none" stroke="#a9dcea" stroke-width="2.800"/><path d="M418.0 257.6V534.8" stroke="#1c1c1c" stroke-width="1.900"/><path d="M458.6 257.6V534.8" stroke="#1c1c1c" stroke-width="1.900"/><path d="M462.2 257.6V534.8" stroke="#1c1c1c" stroke-width="1.900"/><path d="M502.5 257.6V534.8" stroke="#1c1c1c" stroke-width="1.900"/><path d="M528.5 257.6V534.8" stroke="#1c1c1c" stroke-width="1.900"/><path d="M550.4 257.6V534.8" stroke="#1c1c1c" stroke-width="1.900"/><path d="M577.2 257.6V534.8" stroke="#1c1c1c" stroke-width="1.900"/><path d="M604.1 257.6V534.8" stroke="#1c1c1c" stroke-width="1.900"/><path d="M629.6 257.6V534.8" stroke="#1c1c1c" stroke-width="1.900"/><path d="M670.3 257.6V534.8" stroke="#1c1c1c" stroke-width="1.900"/><path d="M685.2 257.6V534.8" stroke="#1c1c1c" stroke-width="1.900"/><path d="M765.2 257.6V534.8" stroke="#1c1c1c" stroke-width="1.900"/><path d="M974.8 257.6V534.8" stroke="#1c1c1c" stroke-width="1.900"/><path d="M1011.4 257.6V534.8" stroke="#1c1c1c" stroke-width="1.900"/><path d="M1051.4 257.6V534.8" stroke="#1c1c1c" stroke-width="1.900"/><path d="M412.6 535.4H1166.2" stroke="#a9a3d0" stroke-width="1.800"/><path d="M412.6 534.8v-3" stroke="#333" stroke-width="1"/><path d="M484.2 534.8v-3" stroke="#333" stroke-width="1"/><path d="M555.8 534.8v-3" stroke="#333" stroke-width="1"/><path d="M627.4 534.8v-3" stroke="#333" stroke-width="1"/><path d="M699.0 534.8v-3" stroke="#333" stroke-width="1"/><path d="M770.7 534.8v-3" stroke="#333" stroke-width="1"/><path d="M842.3 534.8v-3" stroke="#333" stroke-width="1"/><path d="M913.9 534.8v-3" stroke="#333" stroke-width="1"/><path d="M985.5 534.8v-3" stroke="#333" stroke-width="1"/><path d="M1057.1 534.8v-3" stroke="#333" stroke-width="1"/><path d="M1128.7 534.8v-3" stroke="#333" stroke-width="1"/><path d="M1200.3 534.8v-3" stroke="#333" stroke-width="1"/><path d="M1272.0 534.8v-3" stroke="#333" stroke-width="1"/><rect x="411.6" y="238.1" width="12.8" height="19.600" fill="#f3f3f3" stroke="#b9b9b9" stroke-width="1"/><text x="418.0" y="253.2" font-family="Liberation Sans, sans-serif" font-size="14" text-anchor="middle" fill="#1a1a1a">2</text><rect x="452.2" y="238.1" width="12.8" height="19.600" fill="#f3f3f3" stroke="#b9b9b9" stroke-width="1"/><text x="458.6" y="253.2" font-family="Liberation Sans, sans-serif" font-size="14" text-anchor="middle" fill="#1a1a1a">3</text><rect x="455.8" y="238.1" width="12.8" height="19.600" fill="#f3f3f3" stroke="#b9b9b9" stroke-width="1"/><text x="462.2" y="253.2" font-family="Liberation Sans, sans-serif" font-size="14" text-anchor="middle" fill="#1a1a1a">4</text><rect x="496.1" y="238.1" width="12.8" height="19.600" fill="#f3f3f3" stroke="#b9b9b9" stroke-width="1"/><text x="502.5" y="253.2" font-family="Liberation Sans, sans-serif" font-size="14" text-anchor="middle" fill="#1a1a1a">5</text><rect x="522.1" y="238.1" width="12.8" height="19.600" fill="#f3f3f3" stroke="#b9b9b9" stroke-width="1"/><text x="528.5" y="253.2" font-family="Liberation Sans, sans-serif" font-size="14" text-anchor="middle" fill="#1a1a1a">6</text><rect x="544.0" y="238.1" width="12.8" height="19.600" fill="#f3f3f3" stroke="#b9b9b9" stroke-width="1"/><text x="550.4" y="253.2" font-family="Liberation Sans, sans-serif" font-size="14" text-anchor="middle" fill="#1a1a1a">7</text><rect x="570.8" y="238.1" width="12.8" height="19.600" fill="#f3f3f3" stroke="#b9b9b9" stroke-width="1"/><text x="577.2" y="253.2" font-family="Liberation Sans, sans-serif" font-size="14" text-anchor="middle" fill="#1a1a1a">8</text><rect x="597.7" y="238.1" width="12.8" height="19.600" fill="#f3f3f3" stroke="#b9b9b9" stroke-width="1"/><text x="604.1" y="253.2" font-family="Liberation Sans, sans-serif" font-size="14" text-anchor="middle" fill="#1a1a1a">9</text><rect x="617.3" y="238.1" width="24.6" height="19.600" fill="#f3f3f3" stroke="#b9b9b9" stroke-width="1"/><text x="629.6" y="253.2" font-family="Liberation Sans, sans-serif" font-size="14" text-anchor="middle" fill="#1a1a1a">10</text><rect x="658.0" y="238.1" width="24.6" height="19.600" fill="#f3f3f3" stroke="#b9b9b9" stroke-width="1"/><text x="670.3" y="253.2" font-family="Liberation Sans, sans-serif" font-size="14" text-anchor="middle" fill="#1a1a1a">11</text><rect x="672.9" y="238.1" width="24.6" height="19.600" fill="#f3f3f3" stroke="#b9b9b9" stroke-width="1"/><text x="685.2" y="253.2" font-family="Liberation Sans, sans-serif" font-size="14" text-anchor="middle" fill="#1a1a1a">12</text><rect x="752.9" y="238.1" width="24.6" height="19.600" fill="#f3f3f3" stroke="#b9b9b9" stroke-width="1"/><text x="765.2" y="253.2" font-family="Liberation Sans, sans-serif" font-size="14" text-anchor="middle" fill="#1a1a1a">13</text><rect x="962.5" y="238.1" width="24.6" height="19.600" fill="#f3f3f3" stroke="#b9b9b9" stroke-width="1"/><text x="974.8" y="253.2" font-family="Liberation Sans, sans-serif" font-size="14" text-anchor="middle" fill="#1a1a1a">14</text><rect x="999.1" y="238.1" width="24.6" height="19.600" fill="#f3f3f3" stroke="#b9b9b9" stroke-width="1"/><text x="1011.4" y="253.2" font-family="Liberation Sans, sans-serif" font-size="14" text-anchor="middle" fill="#1a1a1a">15</text><rect x="1039.1" y="238.1" width="24.6" height="19.600" fill="#f3f3f3" stroke="#b9b9b9" stroke-width="1"/><text x="1051.4" y="253.2" font-family="Liberation Sans, sans-serif" font-size="14" text-anchor="middle" fill="#1a1a1a">16</text></svg>
<div class="a" style="left:1287.7px;top:224.2px;width:199.3px;height:262.2px;background:#fff;border:1px solid #e3e3e3;box-sizing:border-box;"></div>
<div class="a t" style="left:1310.30px;top:229.60px;line-height:17px;font-size:13px;color:#111;letter-spacing:0.138px;">Reference-Purification</div>
<div class="a t" style="left:1450.00px;top:230.40px;line-height:14px;font-size:10.5px;color:#14224d;font-weight:700;">1</div>
<div class="a" style="left:1447.9px;top:233.1px;width:1.2px;height:6.5px;background:#6aa6e0;"></div>
<div class="a" style="left:1298.8px;top:255.8px;width:21.8px;height:3px;background:#8fb94b;"></div>
<div class="a t" style="left:1327.60px;top:249.10px;line-height:16px;font-size:12px;color:#222;font-style:italic;letter-spacing:-0.457px;">FLP_DMT-Off</div>
<svg class="a" style="left:1463.3px;top:250.60000000000002px;" width="14" height="14" viewBox="0 0 14 14"><rect width="14" height="14" rx="2" fill="#1e453e"/><path d="M2.800 7.300l3 3 5.600-6" fill="none" stroke="#fff" stroke-width="1.700"/></svg>
<div class="a" style="left:1298.8px;top:279.7px;width:21.8px;height:3px;background:#d98b88;"></div>
<div class="a t" style="left:1327.60px;top:273.00px;line-height:16px;font-size:12px;color:#222;font-style:italic;letter-spacing:-0.391px;">N-1_DMT-Off_SB</div>
<svg class="a" style="left:1463.3px;top:274.5px;" width="14" height="14" viewBox="0 0 14 14"><rect width="14" height="14" rx="2" fill="#1e453e"/><path d="M2.800 7.300l3 3 5.600-6" fill="none" stroke="#fff" stroke-width="1.700"/></svg>
<div class="a" style="left:1298.8px;top:303.6px;width:21.8px;height:3px;background:#ffb27a;"></div>
<div class="a t" style="left:1327.60px;top:296.90px;line-height:16px;font-size:12px;color:#222;font-style:italic;letter-spacing:-0.353px;">N+1_DMT-Off_SB</div>
<svg class="a" style="left:1463.3px;top:298.4px;" width="14" height="14" viewBox="0 0 14 14"><rect width="14" height="14" rx="2" fill="#1e453e"/><path d="M2.800 7.300l3 3 5.600-6" fill="none" stroke="#fff" stroke-width="1.700"/></svg>
<div class="a" style="left:1298.8px;top:333.5px;width:21.8px;height:3px;background:#85cde0;"></div>
<div class="a t" style="left:1327.60px;top:320.70px;line-height:16px;font-size:12px;color:#222;font-style:italic;letter-spacing:-0.338px;">Shortmers_DMT-O</div>
<div class="a t" style="left:1327.60px;top:336.80px;line-height:16px;font-size:12px;color:#222;font-style:italic;letter-spacing:-1.087px;">ff_SB</div>
<svg class="a" style="left:1463.3px;top:328.7px;" width="14" height="14" viewBox="0 0 14 14"><rect width="14" height="14" rx="2" fill="#1e453e"/><path d="M2.800 7.300l3 3 5.600-6" fill="none" stroke="#fff" stroke-width="1.700"/></svg>
<div class="a" style="left:1298.8px;top:369.5px;width:21.8px;height:3px;background:#b29cd3;"></div>
<div class="a t" style="left:1327.60px;top:357.00px;line-height:16px;font-size:12px;color:#222;font-style:italic;letter-spacing:-0.292px;">Longmers_DMT-Of</div>
<div class="a t" style="left:1327.60px;top:372.60px;line-height:16px;font-size:12px;color:#222;font-style:italic;letter-spacing:-1.505px;">f_SB</div>
<svg class="a" style="left:1463.3px;top:364.6px;" width="14" height="14" viewBox="0 0 14 14"><rect width="14" height="14" rx="2" fill="#1e453e"/><path d="M2.800 7.300l3 3 5.600-6" fill="none" stroke="#fff" stroke-width="1.700"/></svg>
<div class="a" style="left:1298.8px;top:399.5px;width:21.8px;height:2.6px;background:#f0b5b8;"></div>
<div class="a t" style="left:1327.60px;top:392.80px;line-height:16px;font-size:12px;color:#222;font-style:italic;letter-spacing:-0.262px;">N-1_DMT-Off_WB</div>
<svg class="a" style="left:1463.3px;top:394.3px;" width="14" height="14" viewBox="0 0 14 14"><rect width="14" height="14" rx="2" fill="#1e453e"/><path d="M2.800 7.300l3 3 5.600-6" fill="none" stroke="#fff" stroke-width="1.700"/></svg>
<div class="a" style="left:1298.8px;top:429.2px;width:21.8px;height:3px;background:#a9dcea;"></div>
<div class="a t" style="left:1327.60px;top:416.30px;line-height:16px;font-size:12px;color:#222;font-style:italic;letter-spacing:-0.338px;">Shortmers_DMT-O</div>
<div class="a t" style="left:1327.60px;top:431.90px;line-height:16px;font-size:12px;color:#222;font-style:italic;letter-spacing:-0.668px;">ff_WB</div>
<svg class="a" style="left:1463.3px;top:424.3px;" width="14" height="14" viewBox="0 0 14 14"><rect width="14" height="14" rx="2" fill="#1e453e"/><path d="M2.800 7.300l3 3 5.600-6" fill="none" stroke="#fff" stroke-width="1.700"/></svg>
<div class="a" style="left:1298.8px;top:464.9px;width:21.8px;height:2.2px;background:#d3c8e3;"></div>
<div class="a t" style="left:1327.60px;top:452.00px;line-height:16px;font-size:12px;color:#222;font-style:italic;letter-spacing:-0.292px;">Longmers_DMT-Of</div>
<div class="a t" style="left:1327.60px;top:467.70px;line-height:16px;font-size:12px;color:#222;font-style:italic;letter-spacing:-0.946px;">f_WB</div>
<svg class="a" style="left:1463.3px;top:459.7px;" width="14" height="14" viewBox="0 0 14 14"><rect width="14" height="14" rx="2" fill="#1e453e"/><path d="M2.800 7.300l3 3 5.600-6" fill="none" stroke="#fff" stroke-width="1.700"/></svg>
<svg class="a" style="left:358px;top:616px" width="1134" height="372" viewBox="358 616 1134 372"><path d="M414.6 636.2H1228.6" fill="none" stroke="#808080" stroke-width="1"/><path d="M414.90000000000003 636.2V933.0" stroke="#222" stroke-width="1.800"/><path d="M414.0 933.0H1228.8999999999999" stroke="#2a2a2a" stroke-width="1.600"/><path d="M1228.6 636.2V933.0" stroke="#8c8c8c" stroke-width="1.400"/><path d="M414.6 933.0h4" stroke="#222" stroke-width="1"/><path d="M414.6 911.8h4" stroke="#222" stroke-width="1"/><path d="M414.6 890.6h4" stroke="#222" stroke-width="1"/><path d="M414.6 869.4h4" stroke="#222" stroke-width="1"/><path d="M414.6 848.2h4" stroke="#222" stroke-width="1"/><path d="M414.6 827.0h4" stroke="#222" stroke-width="1"/><path d="M414.6 805.8h4" stroke="#222" stroke-width="1"/><path d="M414.6 784.6h4" stroke="#222" stroke-width="1"/><path d="M414.6 763.4h4" stroke="#222" stroke-width="1"/><path d="M414.6 742.2h4" stroke="#222" stroke-width="1"/><path d="M414.6 721.0h4" stroke="#222" stroke-width="1"/><path d="M414.6 699.8h4" stroke="#222" stroke-width="1"/><path d="M414.6 678.6h4" stroke="#222" stroke-width="1"/><path d="M414.6 657.4h4" stroke="#222" stroke-width="1"/><path d="M414.6 636.2h4" stroke="#222" stroke-width="1"/><path d="M1228.6 933.0h-4" stroke="#8c8c8c" stroke-width="1"/><path d="M1228.6 918.2h-4" stroke="#8c8c8c" stroke-width="1"/><path d="M1228.6 903.3h-4" stroke="#8c8c8c" stroke-width="1"/><path d="M1228.6 888.5h-4" stroke="#8c8c8c" stroke-width="1"/><path d="M1228.6 873.6h-4" stroke="#8c8c8c" stroke-width="1"/><path d="M1228.6 858.8h-4" stroke="#8c8c8c" stroke-width="1"/><path d="M1228.6 844.0h-4" stroke="#8c8c8c" stroke-width="1"/><path d="M1228.6 829.1h-4" stroke="#8c8c8c" stroke-width="1"/><path d="M1228.6 814.3h-4" stroke="#8c8c8c" stroke-width="1"/><path d="M1228.6 799.4h-4" stroke="#8c8c8c" stroke-width="1"/><path d="M1228.6 784.6h-4" stroke="#8c8c8c" stroke-width="1"/><path d="M1228.6 769.8h-4" stroke="#8c8c8c" stroke-width="1"/><path d="M1228.6 754.9h-4" stroke="#8c8c8c" stroke-width="1"/><path d="M1228.6 740.1h-4" stroke="#8c8c8c" stroke-width="1"/><path d="M1228.6 725.2h-4" stroke="#8c8c8c" stroke-width="1"/><path d="M1228.6 710.4h-4" stroke="#8c8c8c" stroke-width="1"/><path d="M1228.6 695.6h-4" stroke="#8c8c8c" stroke-width="1"/><path d="M1228.6 680.7h-4" stroke="#8c8c8c" stroke-width="1"/><path d="M1228.6 665.9h-4" stroke="#8c8c8c" stroke-width="1"/><path d="M1228.6 651.0h-4" stroke="#8c8c8c" stroke-width="1"/><path d="M1228.6 636.2h-4" stroke="#8c8c8c" stroke-width="1"/><path d="M414.6 933.0v-4" stroke="#222" stroke-width="1"/><path d="M482.4 933.0v-4" stroke="#222" stroke-width="1"/><path d="M550.2 933.0v-4" stroke="#222" stroke-width="1"/><path d="M618.0 933.0v-4" stroke="#222" stroke-width="1"/><path d="M685.9 933.0v-4" stroke="#222" stroke-width="1"/><path d="M753.7 933.0v-4" stroke="#222" stroke-width="1"/><path d="M821.5 933.0v-4" stroke="#222" stroke-width="1"/><path d="M889.3 933.0v-4" stroke="#222" stroke-width="1"/><path d="M957.1 933.0v-4" stroke="#222" stroke-width="1"/><path d="M1024.9 933.0v-4" stroke="#222" stroke-width="1"/><path d="M1092.7 933.0v-4" stroke="#222" stroke-width="1"/><path d="M1160.5 933.0v-4" stroke="#222" stroke-width="1"/><path d="M1228.3 933.0v-4" stroke="#222" stroke-width="1"/><text x="410.3" y="938.3" font-family="Liberation Sans, sans-serif" font-size="13.800" text-anchor="end" fill="#222">0</text><text x="410.3" y="895.9" font-family="Liberation Sans, sans-serif" font-size="13.800" text-anchor="end" fill="#222">2</text><text x="410.3" y="853.5" font-family="Liberation Sans, sans-serif" font-size="13.800" text-anchor="end" fill="#222">4</text><text x="410.3" y="811.1" font-family="Liberation Sans, sans-serif" font-size="13.800" text-anchor="end" fill="#222">6</text><text x="410.3" y="768.7" font-family="Liberation Sans, sans-serif" font-size="13.800" text-anchor="end" fill="#222">8</text><text x="410.3" y="726.3" font-family="Liberation Sans, sans-serif" font-size="13.800" text-anchor="end" fill="#222">10</text><text x="410.3" y="683.9" font-family="Liberation Sans, sans-serif" font-size="13.800" text-anchor="end" fill="#222">12</text><text x="410.3" y="641.5" font-family="Liberation Sans, sans-serif" font-size="13.800" text-anchor="end" fill="#222">14</text><text x="1233.200" y="937.9" font-family="Liberation Sans, sans-serif" font-size="13.800" text-anchor="start" fill="#7a7a7a">0</text><text x="1233.200" y="908.2" font-family="Liberation Sans, sans-serif" font-size="13.800" text-anchor="start" fill="#7a7a7a">20</text><text x="1233.200" y="878.5" font-family="Liberation Sans, sans-serif" font-size="13.800" text-anchor="start" fill="#7a7a7a">40</text><text x="1233.200" y="848.9" font-family="Liberation Sans, sans-serif" font-size="13.800" text-anchor="start" fill="#7a7a7a">60</text><text x="1233.200" y="819.2" font-family="Liberation Sans, sans-serif" font-size="13.800" text-anchor="start" fill="#7a7a7a">80</text><text x="1233.200" y="789.5" font-family="Liberation Sans, sans-serif" font-size="13.800" text-anchor="start" fill="#7a7a7a">100</text><text x="1233.200" y="759.8" font-family="Liberation Sans, sans-serif" font-size="13.800" text-anchor="start" fill="#7a7a7a">120</text><text x="1233.200" y="730.1" font-family="Liberation Sans, sans-serif" font-size="13.800" text-anchor="start" fill="#7a7a7a">140</text><text x="1233.200" y="700.5" font-family="Liberation Sans, sans-serif" font-size="13.800" text-anchor="start" fill="#7a7a7a">160</text><text x="1233.200" y="670.8" font-family="Liberation Sans, sans-serif" font-size="13.800" text-anchor="start" fill="#7a7a7a">180</text><text x="1233.200" y="641.1" font-family="Liberation Sans, sans-serif" font-size="13.800" text-anchor="start" fill="#7a7a7a">200</text><text x="414.6" y="949.400" font-family="Liberation Sans, sans-serif" font-size="13.800" text-anchor="middle" fill="#222">0</text><text x="550.2" y="949.400" font-family="Liberation Sans, sans-serif" font-size="13.800" text-anchor="middle" fill="#222">50</text><text x="685.9" y="949.400" font-family="Liberation Sans, sans-serif" font-size="13.800" text-anchor="middle" fill="#222">100</text><text x="821.5" y="949.400" font-family="Liberation Sans, sans-serif" font-size="13.800" text-anchor="middle" fill="#222">150</text><text x="957.1" y="949.400" font-family="Liberation Sans, sans-serif" font-size="13.800" text-anchor="middle" fill="#222">200</text><text x="1092.7" y="949.400" font-family="Liberation Sans, sans-serif" font-size="13.800" text-anchor="middle" fill="#222">250</text><text x="1228.3" y="949.400" font-family="Liberation Sans, sans-serif" font-size="13.800" text-anchor="middle" fill="#222">300</text><text x="821.500" y="973" font-family="Liberation Sans, sans-serif" font-size="18" font-weight="700" text-anchor="middle" fill="#111">Volume (mL)</text><text transform="translate(386,784.500) rotate(-90)" font-family="Liberation Sans, sans-serif" font-size="18" font-weight="700" text-anchor="middle" fill="#111">pH (-)</text><text transform="translate(1263.500,783.500) rotate(90)" font-family="Liberation Sans, sans-serif" font-size="18" font-weight="700" text-anchor="middle" fill="#7d7d7d">Conductivity (mS/cm)</text><path d="M419.8 655.2V932.0" stroke="#1c1c1c" stroke-width="1.900"/><path d="M458.1 655.2V932.0" stroke="#1c1c1c" stroke-width="1.900"/><path d="M461.6 655.2V932.0" stroke="#1c1c1c" stroke-width="1.900"/><path d="M499.8 655.2V932.0" stroke="#1c1c1c" stroke-width="1.900"/><path d="M524.3 655.2V932.0" stroke="#1c1c1c" stroke-width="1.900"/><path d="M545.1 655.2V932.0" stroke="#1c1c1c" stroke-width="1.900"/><path d="M570.5 655.2V932.0" stroke="#1c1c1c" stroke-width="1.900"/><path d="M595.9 655.2V932.0" stroke="#1c1c1c" stroke-width="1.900"/><path d="M620.1 655.2V932.0" stroke="#1c1c1c" stroke-width="1.900"/><path d="M658.6 655.2V932.0" stroke="#1c1c1c" stroke-width="1.900"/><path d="M672.7 655.2V932.0" stroke="#1c1c1c" stroke-width="1.900"/><path d="M748.5 655.2V932.0" stroke="#1c1c1c" stroke-width="1.900"/><path d="M946.9 655.2V932.0" stroke="#1c1c1c" stroke-width="1.900"/><path d="M981.6 655.2V932.0" stroke="#1c1c1c" stroke-width="1.900"/><path d="M1019.5 655.2V932.0" stroke="#1c1c1c" stroke-width="1.900"/><path d="M415.1 925.4C416.3 925.4 421.6 926.1 423.1 925.4C424.6 924.7 424.6 927.1 425.1 920.6C425.5 914.1 425.9 902.3 426.3 882.0C426.8 861.8 427.6 812.1 428.3 785.6C428.9 759.1 429.8 723.2 430.5 705.3C431.2 687.5 432.0 675.4 432.8 666.8C433.5 658.1 434.5 651.5 435.3 647.5C436.2 643.5 437.6 641.4 438.6 640.1C439.5 638.8 439.8 638.7 441.8 638.5C443.7 638.3 448.3 638.5 451.4 638.5C454.5 638.5 460.5 637.6 462.7 638.5C464.8 639.4 465.0 641.0 465.9 644.3C466.7 647.6 467.4 651.2 468.1 660.3C468.8 669.5 469.9 686.5 470.7 705.3C471.5 724.1 472.5 761.5 473.3 785.6C474.0 809.7 475.0 847.2 475.8 866.0C476.6 884.8 477.8 902.0 478.7 910.9C479.6 919.9 481.0 922.8 481.9 925.4C482.9 928.1 483.0 928.1 485.1 928.6C487.3 929.1 492.8 928.7 496.4 928.6C500.0 928.5 506.8 928.5 509.2 928.0C511.6 927.5 511.6 926.8 512.4 925.4C513.3 924.1 514.2 920.5 515.0 919.0C515.8 917.4 516.5 915.6 517.6 915.1C518.7 914.6 520.7 915.5 522.1 915.8C523.5 916.0 525.8 915.8 526.9 916.7C528.0 917.7 528.4 920.6 529.2 922.2C529.9 923.7 530.4 925.8 531.7 927.0C533.1 928.2 536.2 929.3 538.2 930.2C540.1 931.1 542.7 932.5 544.6 932.9C546.5 933.3 549.8 934.3 551.0 932.9C552.3 931.5 552.4 926.1 552.9 923.8C553.4 921.5 553.7 918.8 554.2 917.4C554.7 915.9 555.7 919.5 556.1 914.2C556.6 908.9 557.0 889.5 557.4 882.0C557.9 874.6 558.6 867.8 559.0 864.4C559.5 860.9 560.0 859.1 560.6 858.9C561.3 858.7 562.2 861.7 563.2 862.8C564.2 863.8 565.8 865.4 567.1 866.0C568.4 866.5 570.7 866.8 571.9 866.6C573.1 866.4 574.3 865.7 575.1 864.4C575.9 863.1 576.7 857.9 577.3 857.9C578.0 857.9 578.7 859.3 579.3 864.4C579.9 869.4 580.7 883.7 581.5 891.7C582.3 899.6 583.8 912.1 584.7 917.4C585.7 922.7 586.7 925.2 588.0 927.0C589.2 928.8 591.1 929.3 592.8 929.6C594.5 929.8 597.8 929.2 599.2 928.6C600.5 928.0 601.1 928.1 601.8 925.4C602.4 922.8 602.9 914.0 603.4 910.9C603.9 907.9 604.5 904.7 605.0 905.2C605.5 905.6 606.0 911.3 606.6 914.2C607.2 917.0 608.0 922.6 608.8 924.4C609.7 926.3 610.6 926.4 612.0 926.4C613.5 926.4 614.8 924.7 618.5 924.4C622.1 924.1 629.9 924.4 636.4 924.4C643.0 924.4 657.6 924.3 662.1 924.4C666.7 924.6 665.7 924.8 666.9 925.4C668.2 926.0 669.0 927.7 670.2 928.6C671.4 929.5 671.4 930.7 675.0 931.2C678.6 931.7 682.7 931.7 694.3 931.8C705.8 931.9 742.8 931.9 752.1 931.8C761.3 931.7 755.0 931.9 755.9 931.2C756.9 930.5 757.6 929.6 758.5 927.0C759.4 924.5 760.9 918.5 761.7 914.2C762.6 909.8 763.6 902.9 764.3 898.1C765.0 893.3 765.7 884.9 766.2 882.0C766.7 879.1 766.7 879.8 767.5 878.8C768.3 877.9 769.3 877.3 771.4 875.6C773.4 873.9 777.1 870.2 781.0 867.6C784.9 864.9 792.7 860.8 797.1 857.9C801.4 855.0 805.1 852.4 809.9 848.3C814.7 844.2 822.4 837.1 829.2 830.6C835.9 824.1 847.4 812.1 854.9 804.9C862.4 797.7 872.7 788.7 879.3 782.4C885.8 776.2 892.8 768.7 898.6 763.2C904.3 757.6 912.5 750.1 917.8 745.5C923.1 740.9 929.6 735.9 933.9 732.6C938.2 729.4 944.1 725.7 946.7 724.0C949.4 722.2 950.5 722.1 951.6 720.7C952.6 719.4 953.2 718.7 953.8 715.0C954.4 711.2 955.1 702.4 955.7 695.7C956.4 688.9 957.3 676.7 958.0 670.0C958.7 663.2 959.5 655.0 960.2 650.7C961.0 646.4 961.9 642.9 962.8 641.1C963.7 639.2 964.1 639.0 966.0 638.5C968.0 638.0 972.5 637.7 975.7 637.9C978.8 638.0 984.9 636.8 986.9 639.5C988.9 642.1 988.6 650.5 989.2 655.5C989.7 660.6 990.1 664.3 990.4 673.2C990.8 682.1 991.3 700.5 991.7 715.0C992.2 729.4 992.9 753.2 993.3 769.6C993.8 786.0 994.5 809.3 994.9 824.2C995.4 839.1 996.1 857.6 996.5 869.2C997.0 880.7 997.7 893.8 998.2 901.3C998.6 908.8 999.2 915.2 999.8 919.0C1000.3 922.7 1001.0 924.9 1002.0 926.4C1003.0 927.8 1003.4 928.3 1006.2 928.6C1009.0 929.0 1017.8 928.6 1020.6 928.6C1023.5 928.6 1024.3 928.3 1025.5 928.6C1026.7 929.0 1027.5 930.2 1028.7 930.9C1029.9 931.5 1031.8 932.5 1033.5 932.8C1035.2 933.1 1029.9 932.9 1039.9 932.9C1049.9 932.9 1086.7 932.9 1100.0 932.9C1113.3 932.9 1124.2 932.9 1128.5 932.9" fill="none" stroke="#f76db1" stroke-width="2.600" stroke-linejoin="round"/><path d="M415.1 669.3C416.4 669.3 422.4 670.2 424.1 669.3C425.8 668.5 425.7 666.6 426.3 663.6C427.0 660.5 427.6 652.4 428.3 649.1C428.9 645.8 429.8 641.9 430.5 641.7C431.2 641.5 432.0 644.7 432.8 647.5C433.6 650.3 435.0 657.4 436.0 660.3C436.9 663.3 438.1 666.1 439.2 667.4C440.3 668.8 441.5 669.0 443.4 669.3C445.2 669.6 448.0 669.3 451.4 669.3C454.8 669.3 463.0 669.0 465.9 669.3C468.8 669.7 469.4 670.0 470.7 671.6C472.0 673.1 473.3 676.2 474.5 679.6C475.7 683.0 477.5 690.6 478.7 694.1C480.0 697.5 481.7 701.2 482.9 702.8C484.1 704.3 485.2 704.6 486.7 704.7C488.3 704.7 491.0 703.7 493.2 703.1C495.3 702.4 499.3 701.5 501.2 700.5C503.1 699.5 504.7 697.8 506.0 696.3C507.3 694.9 509.0 692.2 509.9 690.9C510.8 689.6 511.5 687.5 512.1 687.7C512.8 687.8 513.6 690.7 514.4 691.8C515.1 692.9 515.9 694.6 517.3 695.0C518.7 695.5 522.0 695.3 523.7 695.0C525.4 694.8 527.4 694.5 528.5 693.1C529.6 691.8 530.2 687.6 531.1 686.0C532.0 684.5 533.2 682.8 534.3 682.8C535.4 682.8 536.9 683.9 538.2 686.0C539.5 688.2 541.5 694.5 543.0 697.3C544.4 700.1 546.5 702.6 547.8 704.7C549.1 706.8 550.9 708.6 551.6 711.1C552.4 713.6 552.7 715.0 552.9 721.4C553.2 727.7 553.2 742.9 553.3 753.5C553.3 764.1 553.4 790.6 553.6 792.1C553.7 793.5 553.9 773.8 554.2 763.2C554.5 752.6 555.1 734.4 555.5 721.4C555.9 708.4 556.4 685.8 556.8 676.4C557.2 667.0 557.6 661.9 558.1 658.7C558.5 655.6 559.1 655.6 559.7 655.5C560.3 655.4 561.2 656.5 562.2 658.1C563.3 659.7 565.2 664.3 566.4 666.1C567.6 667.9 569.2 669.5 570.3 670.0C571.3 670.5 572.6 670.4 573.5 669.3C574.4 668.3 575.3 664.3 576.1 662.9C576.8 661.6 577.6 660.1 578.3 660.3C579.0 660.5 579.6 660.8 580.6 664.2C581.5 667.6 583.5 677.7 584.7 682.8C586.0 687.9 587.7 695.4 588.9 698.3C590.1 701.1 591.2 701.5 592.8 702.1C594.3 702.7 597.8 702.6 599.2 702.1C600.5 701.6 601.2 701.3 601.8 698.9C602.3 696.5 602.7 689.0 603.1 686.0C603.4 683.1 604.0 678.5 604.3 679.0C604.6 679.5 604.8 678.1 605.0 689.3C605.2 700.4 605.4 732.3 605.6 753.5C605.9 774.7 606.1 813.3 606.6 830.6C607.1 848.0 608.0 860.7 608.8 869.2C609.7 877.6 611.0 883.1 612.0 886.8C613.1 890.6 614.5 892.9 615.9 894.2C617.3 895.6 618.6 895.6 621.7 895.8C624.8 896.1 630.4 895.8 636.4 895.8C642.5 895.8 657.4 896.1 662.1 895.8C666.9 895.6 666.5 895.3 667.9 894.2C669.4 893.1 670.7 890.0 671.8 888.5C672.8 886.9 673.9 885.1 675.0 883.6C676.0 882.2 677.9 880.5 678.8 878.8C679.8 877.1 680.5 874.8 681.4 872.4C682.3 870.0 683.7 864.9 684.6 862.8C685.6 860.6 686.4 859.3 687.8 857.9C689.3 856.6 690.9 855.2 694.3 853.8C697.6 852.3 705.5 849.7 710.3 848.3C715.1 846.8 721.6 845.3 726.4 844.1C731.2 842.9 738.6 841.2 742.4 840.3C746.3 839.3 750.2 838.4 752.1 837.7C754.0 837.0 754.4 837.0 755.3 835.4C756.2 833.9 757.1 830.1 757.9 827.4C758.6 824.8 759.4 819.8 760.1 817.8C760.8 815.7 761.9 816.8 762.4 813.9C762.9 811.0 763.1 812.4 763.3 798.5C763.6 784.6 763.7 740.2 764.0 721.4C764.2 702.6 764.6 682.0 764.9 673.2C765.3 664.4 765.7 664.7 766.2 662.9C766.7 661.1 767.1 661.2 768.2 661.3C769.2 661.4 770.6 662.8 773.0 663.6C775.4 664.3 780.6 665.3 784.2 666.1C787.8 667.0 793.2 668.6 797.1 669.3C800.9 670.1 805.1 670.7 809.9 670.9C814.7 671.2 822.4 671.3 829.2 671.3C835.9 671.3 850.3 671.0 854.9 670.9C859.5 670.9 852.0 671.2 860.0 670.9C868.0 670.7 893.7 669.6 908.2 669.3C922.7 669.0 944.8 669.0 956.4 669.0C968.0 669.0 980.1 669.0 985.3 669.3C990.5 669.7 989.6 670.0 991.1 671.6C992.5 673.1 993.9 676.5 994.9 679.6C996.0 682.8 997.2 689.1 998.2 692.5C999.1 695.8 1000.3 700.2 1001.4 702.1C1002.4 704.0 1003.8 704.9 1005.2 705.3C1006.7 705.7 1009.2 705.1 1011.0 704.7C1012.8 704.3 1015.7 703.6 1017.4 702.8C1019.1 701.9 1021.0 699.7 1022.2 698.9C1023.5 698.1 1024.3 697.4 1025.5 697.6C1026.7 697.9 1028.6 698.9 1030.3 700.5C1032.0 702.1 1034.3 704.4 1036.7 708.5C1039.1 712.6 1043.0 720.6 1046.3 727.8C1049.7 735.0 1055.8 749.5 1059.2 756.7C1062.6 764.0 1066.4 771.4 1068.8 776.0C1071.2 780.6 1073.6 784.7 1075.3 787.2C1076.9 789.8 1078.6 791.5 1080.1 792.7C1081.5 793.9 1083.2 794.8 1084.9 795.3C1086.6 795.8 1089.1 796.1 1091.3 796.2C1093.6 796.4 1094.4 796.2 1100.0 796.2C1105.6 796.3 1124.2 796.3 1128.5 796.3" fill="none" stroke="#0a0a0a" stroke-width="3.200" stroke-linejoin="round"/><rect x="413.9" y="635.7" width="11.8" height="19.600" fill="#f3f3f3" stroke="#b9b9b9" stroke-width="1"/><text x="419.8" y="650.5" font-family="Liberation Sans, sans-serif" font-size="13" text-anchor="middle" fill="#1a1a1a">2</text><rect x="452.2" y="635.7" width="11.8" height="19.600" fill="#f3f3f3" stroke="#b9b9b9" stroke-width="1"/><text x="458.1" y="650.5" font-family="Liberation Sans, sans-serif" font-size="13" text-anchor="middle" fill="#1a1a1a">3</text><rect x="455.7" y="635.7" width="11.8" height="19.600" fill="#f3f3f3" stroke="#b9b9b9" stroke-width="1"/><text x="461.6" y="650.5" font-family="Liberation Sans, sans-serif" font-size="13" text-anchor="middle" fill="#1a1a1a">4</text><rect x="493.9" y="635.7" width="11.8" height="19.600" fill="#f3f3f3" stroke="#b9b9b9" stroke-width="1"/><text x="499.8" y="650.5" font-family="Liberation Sans, sans-serif" font-size="13" text-anchor="middle" fill="#1a1a1a">5</text><rect x="518.4" y="635.7" width="11.8" height="19.600" fill="#f3f3f3" stroke="#b9b9b9" stroke-width="1"/><text x="524.3" y="650.5" font-family="Liberation Sans, sans-serif" font-size="13" text-anchor="middle" fill="#1a1a1a">6</text><rect x="539.2" y="635.7" width="11.8" height="19.600" fill="#f3f3f3" stroke="#b9b9b9" stroke-width="1"/><text x="545.1" y="650.5" font-family="Liberation Sans, sans-serif" font-size="13" text-anchor="middle" fill="#1a1a1a">7</text><rect x="564.6" y="635.7" width="11.8" height="19.600" fill="#f3f3f3" stroke="#b9b9b9" stroke-width="1"/><text x="570.5" y="650.5" font-family="Liberation Sans, sans-serif" font-size="13" text-anchor="middle" fill="#1a1a1a">8</text><rect x="590.0" y="635.7" width="11.8" height="19.600" fill="#f3f3f3" stroke="#b9b9b9" stroke-width="1"/><text x="595.9" y="650.5" font-family="Liberation Sans, sans-serif" font-size="13" text-anchor="middle" fill="#1a1a1a">9</text><rect x="607.8" y="635.7" width="24.6" height="19.600" fill="#f3f3f3" stroke="#b9b9b9" stroke-width="1"/><text x="620.1" y="650.5" font-family="Liberation Sans, sans-serif" font-size="13" text-anchor="middle" fill="#1a1a1a">10</text><rect x="646.3" y="635.7" width="24.6" height="19.600" fill="#f3f3f3" stroke="#b9b9b9" stroke-width="1"/><text x="658.6" y="650.5" font-family="Liberation Sans, sans-serif" font-size="13" text-anchor="middle" fill="#1a1a1a">11</text><rect x="660.4" y="635.7" width="24.6" height="19.600" fill="#f3f3f3" stroke="#b9b9b9" stroke-width="1"/><text x="672.7" y="650.5" font-family="Liberation Sans, sans-serif" font-size="13" text-anchor="middle" fill="#1a1a1a">12</text><rect x="736.2" y="635.7" width="24.6" height="19.600" fill="#f3f3f3" stroke="#b9b9b9" stroke-width="1"/><text x="748.5" y="650.5" font-family="Liberation Sans, sans-serif" font-size="13" text-anchor="middle" fill="#1a1a1a">13</text><rect x="934.6" y="635.7" width="24.6" height="19.600" fill="#f3f3f3" stroke="#b9b9b9" stroke-width="1"/><text x="946.9" y="650.5" font-family="Liberation Sans, sans-serif" font-size="13" text-anchor="middle" fill="#1a1a1a">14</text><rect x="969.3" y="635.7" width="24.6" height="19.600" fill="#f3f3f3" stroke="#b9b9b9" stroke-width="1"/><text x="981.6" y="650.5" font-family="Liberation Sans, sans-serif" font-size="13" text-anchor="middle" fill="#1a1a1a">15</text><rect x="1007.2" y="635.7" width="24.6" height="19.600" fill="#f3f3f3" stroke="#b9b9b9" stroke-width="1"/><text x="1019.5" y="650.5" font-family="Liberation Sans, sans-serif" font-size="13" text-anchor="middle" fill="#1a1a1a">16</text></svg>
<div class="a" style="left:1287.7px;top:621.8px;width:199.3px;height:82.4px;background:#fff;border:1px solid #e3e3e3;box-sizing:border-box;"></div>
<div class="a t" style="left:1310.30px;top:627.20px;line-height:17px;font-size:13px;color:#111;letter-spacing:0.138px;">Reference-Purification</div>
<div class="a t" style="left:1450.00px;top:628.00px;line-height:14px;font-size:10.5px;color:#14224d;font-weight:700;">1</div>
<div class="a" style="left:1447.9px;top:630.7px;width:1.2px;height:6.5px;background:#6aa6e0;"></div>
<div class="a" style="left:1298.8px;top:653.3px;width:21.8px;height:3px;background:#0a0a0a;"></div>
<div class="a t" style="left:1327.60px;top:647.60px;line-height:16px;font-size:12px;color:#222;font-style:italic;letter-spacing:-0.839px;">pH</div>
<svg class="a" style="left:1463.3px;top:649.1px;" width="14" height="14" viewBox="0 0 14 14"><rect width="14" height="14" rx="2" fill="#1e453e"/><path d="M2.800 7.300l3 3 5.600-6" fill="none" stroke="#fff" stroke-width="1.700"/></svg>
<div class="a" style="left:1298.8px;top:683.5px;width:21.8px;height:3px;background:#f76db1;"></div>
<div class="a t" style="left:1327.60px;top:671.30px;line-height:16px;font-size:12px;color:#222;font-style:italic;letter-spacing:-0.206px;">Conductivity_no</div>
<div class="a t" style="left:1327.60px;top:687.30px;line-height:16px;font-size:12px;color:#222;font-style:italic;letter-spacing:0.141px;">n-linear</div>
<svg class="a" style="left:1463.3px;top:678.7px;" width="14" height="14" viewBox="0 0 14 14"><rect width="14" height="14" rx="2" fill="#1e453e"/><path d="M2.800 7.300l3 3 5.600-6" fill="none" stroke="#fff" stroke-width="1.700"/></svg>
<div class="a" style="left:1502px;top:194px;width:406.5px;height:796px;background:#fff;border-right:1.300px solid #a2a2a2;box-sizing:border-box;"></div>
<div class="a" style="left:1502px;top:194px;width:406.5px;height:28.3px;border-top:1px solid #8c8c8c;border-bottom:1.500px solid #9a9a9a;box-sizing:border-box;background:linear-gradient(#f1f1f1 0,#ebebeb 48%,#dddddd 52%,#d9d9d9 100%);"></div>
<div class="a t" style="left:1506.30px;top:200.40px;line-height:16px;font-size:12px;color:#1a1a1a;letter-spacing:-0.169px;">Series properties</div>
<svg class="a" style="left:1872px;top:206px;" width="7" height="4" viewBox="0 0 7 4"><path d="M0 0h7L3.500 3.800z" fill="#222"/></svg>
<svg class="a" style="left:1890.5px;top:202.5px;" width="8" height="12" viewBox="0 0 8 12"><path d="M2.300 0.800h3.400v4.800l1.400 1.300v0.700H0.900V6.900L2.300 5.600z" fill="#111"/><path d="M4 7.500v4" stroke="#111" stroke-width="1"/></svg>
<div class="a" style="left:1509.8px;top:230.7px;width:389.5px;height:42px;background:#fff;border:1px solid #e6e6e6;border-bottom-color:#d9d9d9;border-radius:3px;box-sizing:border-box;"></div>
<div class="a t" style="left:1527.10px;top:240.30px;line-height:24px;font-size:18.5px;color:#2f4fd0;letter-spacing:-0.027px;">Chart 2</div>
<div class="a" style="left:1513px;top:282.3px;width:35px;height:35.5px;background:#0b7b6c;border-radius:4.5px;"></div>
<div class="a" style="left:1552.9px;top:282.3px;width:35px;height:35.5px;background:#0b7b6c;border-radius:4.5px;"></div>
<div class="a" style="left:1604.4px;top:282.3px;width:35px;height:35.5px;background:#0b7b6c;border-radius:4.5px;"></div>
<div class="a" style="left:1644.2px;top:282.3px;width:35px;height:35.5px;background:#0b7b6c;border-radius:4.5px;"></div>
<div class="a" style="left:1696px;top:282.3px;width:35px;height:35.5px;background:#0b7b6c;border-radius:4.5px;"></div>
<div class="a" style="left:1735.8px;top:282.3px;width:35px;height:35.5px;background:#0b7b6c;border-radius:4.5px;"></div>
<svg class="a" style="left:1522.5px;top:292px;" width="16" height="16" viewBox="0 0 16 16"><rect x="1" y="1" width="14" height="14" rx="1.500" fill="none" stroke="#fff" stroke-width="1.600"/><path d="M4.600 4.400h6.800v2h-2.400v5.400h-2V6.400H4.600z" fill="#fff"/></svg>
<svg class="a" style="left:1562.9px;top:292.5px;" width="15" height="15" viewBox="0 0 15 15"><rect width="15" height="15" rx="1.800" fill="#fff"/><path d="M4.300 4h6.400v1.900h-2.200v5.300h-2V5.900H4.300z" fill="#0b7b6c"/></svg>
<svg class="a" style="left:1613.7px;top:290.5px;" width="18" height="18" viewBox="0 0 18 18"><path d="M1 4.200A1.700 1.700 0 0 1 2.700 2.500H10.200V7.800H15.500V15.300A1.700 1.700 0 0 1 13.800 17H2.700A1.700 1.700 0 0 1 1 15.300z" fill="#fff"/><path d="M3.200 14.400l3-3.800 2.200 2.600 2.900-3.800 3.600 5z" fill="#0b7b6c"/><path d="M11.800 3.800l4.200-2.300v4.600z M16 1v6.300" fill="#fff" stroke="#fff" stroke-width="1.100" stroke-linejoin="round"/></svg>
<svg class="a" style="left:1651.7px;top:290.5px;" width="20" height="20" viewBox="0 0 24 24"><path fill="#fff" d="M21 19V5c0-1.100-.9-2-2-2H5c-1.100 0-2 .9-2 2v14c0 1.100.9 2 2 2h14c1.100 0 2-.9 2-2zM8.500 13.500l2.500 3.010L14.500 12l4.500 6H5l3.500-4.500z"/></svg>
<svg class="a" style="left:1705px;top:291px;" width="17" height="17" viewBox="0 0 17 17"><g fill="none" stroke="#fff" stroke-width="1.500"><path d="M3.500 10.500V2.500H11.500"/><rect x="6.200" y="5.500" width="9" height="10" rx="1"/><path d="M8.500 10.500h4M10.500 8.500l2 2-2 2" stroke-width="1.200"/></g></svg>
<svg class="a" style="left:1743.8px;top:291.0px;" width="19" height="19" viewBox="0 0 24 24"><path fill="#fff" d="M6 19c0 1.100.9 2 2 2h8c1.100 0 2-.9 2-2V7H6v12zM19 4h-3.500l-1-1h-5l-1 1H5v2h14V4z"/></svg>
<div class="a t" style="left:1513.80px;top:343.60px;line-height:20px;font-size:15px;color:#33363f;letter-spacing:-0.241px;">Series in (mg/mL)</div>
<div class="a" style="left:1644px;top:335px;width:203.8px;height:35.4px;background:#fff;border:1px solid #e4e4e6;border-radius:3px;box-sizing:border-box;"></div>
<div class="a t" style="left:1656.70px;top:341.24px;line-height:19px;font-size:14.5px;color:#2f4fd0;letter-spacing:-0.466px;">FLP_DMT-Off</div>
<svg class="a" style="left:1824.0px;top:347.5px;" width="13" height="9" viewBox="0 0 13 9"><path d="M1.500 1.800L6.500 6.800 11.500 1.800" fill="none" stroke="#222" stroke-width="1.900"/></svg>
<div class="a" style="left:1863.4px;top:335px;width:35.8px;height:35.6px;background:#0b7b6c;border-radius:4.5px;"></div>
<svg class="a" style="left:1871.8px;top:343.5px;" width="19" height="19" viewBox="0 0 24 24"><path fill="#fff" d="M6 19c0 1.100.9 2 2 2h8c1.100 0 2-.9 2-2V7H6v12zM19 4h-3.500l-1-1h-5l-1 1H5v2h14V4z"/></svg>
<div class="a t" style="left:1525.55px;top:400.50px;line-height:16px;font-size:12.4px;color:#2b2e3a;letter-spacing:-0.329px;">Series</div>
<div class="a t" style="left:1590.55px;top:400.50px;line-height:16px;font-size:12.4px;color:#2b2e3a;letter-spacing:-0.356px;">Axes</div>
<div class="a t" style="left:1648.80px;top:400.50px;line-height:16px;font-size:12.4px;color:#2b2e3a;letter-spacing:0.085px;">Legend</div>
<div class="a" style="left:1509.8px;top:426px;width:65.6px;height:2.2px;background:#0a463e;border-radius:1px;"></div>
<svg class="a" style="left:1518.5px;top:479px;" width="14" height="14" viewBox="0 0 14 14"><path d="M2.700 11.300L11.300 2.700" stroke="#22252e" stroke-width="1.500"/><rect x="0.500" y="9.500" width="4" height="4" fill="#22252e"/><rect x="9.500" y="0.500" width="4" height="4" fill="#22252e"/></svg>
<div class="a t" style="left:1537.40px;top:476.25px;line-height:20px;font-size:15px;color:#33363f;letter-spacing:-0.133px;">Chart type</div>
<div class="a" style="left:1663px;top:468.5px;width:158.4px;height:35px;background:#fff;border:1px solid #e4e4e6;border-radius:3px;box-sizing:border-box;"></div>
<div class="a t" style="left:1675.70px;top:474.54px;line-height:19px;font-size:14.5px;color:#2f4fd0;letter-spacing:-0.137px;">Line</div>
<svg class="a" style="left:1797.6000000000001px;top:480.8px;" width="13" height="9" viewBox="0 0 13 9"><path d="M1.500 1.800L6.500 6.800 11.500 1.800" fill="none" stroke="#222" stroke-width="1.900"/></svg>
<div class="a" style="left:1829.8px;top:468.4px;width:35.8px;height:35.2px;background:#0b7b6c;border-radius:4.5px;"></div>
<svg class="a" style="left:1839.2px;top:477.5px;transform:scaleY(0.800);" width="17" height="17" viewBox="0 0 24 24"><path fill="#fff" d="M18.600 6.620c-1.440 0-2.800.560-3.770 1.530L12 10.660 10.480 12h.010L7.800 14.390c-.640.640-1.490.990-2.400.990-1.870 0-3.390-1.510-3.390-3.380S3.530 8.620 5.400 8.620c.910 0 1.760.350 2.440 1.030l1.130 1 1.510-1.340L9.220 8.200C8.200 7.180 6.840 6.620 5.400 6.620 2.420 6.620 0 9.040 0 12s2.420 5.380 5.400 5.380c1.440 0 2.800-.560 3.770-1.530l2.830-2.500.010.010L13.520 12h-.010l2.690-2.390c.640-.640 1.490-.990 2.400-.990 1.870 0 3.390 1.510 3.390 3.380s-1.520 3.380-3.390 3.380c-.9 0-1.760-.350-2.440-1.030l-1.140-1.010-1.510 1.340 1.270 1.120c1.020 1.010 2.370 1.570 3.820 1.570 2.980 0 5.400-2.410 5.400-5.380s-2.420-5.370-5.400-5.370z"/></svg>
<svg class="a" style="left:1518.3px;top:518.7px;" width="14" height="14" viewBox="0 0 14 14"><path d="M7 0.800a6.200 6.200 0 1 0 0 12.400c1.200 0 1.600-.8 1.200-1.600-.5-1 .1-1.900 1.200-1.900h1.500a2.300 2.300 0 0 0 2.300-2.300c0-3.700-2.800-6.600-6.200-6.600z" fill="none" stroke="#22252e" stroke-width="1.400"/><circle cx="4" cy="5.200" r="1" fill="#22252e"/><circle cx="7" cy="3.600" r="1" fill="#22252e"/><circle cx="10" cy="5.200" r="1" fill="#22252e"/><circle cx="3.600" cy="8.400" r="1" fill="#22252e"/></svg>
<div class="a t" style="left:1537.40px;top:516.15px;line-height:20px;font-size:15px;color:#33363f;letter-spacing:-0.123px;">Custom color</div>
<div class="a" style="left:1663px;top:511.8px;width:158.4px;height:27.8px;background:#fff;border:1.500px solid #8a8a8a;border-radius:3px;box-sizing:border-box;"></div>
<div class="a" style="left:1668px;top:517.2px;width:137.7px;height:17px;background:#9aba59;border:1px solid #738c46;box-sizing:border-box;"></div>
<svg class="a" style="left:1810.5px;top:524.8px;" width="5" height="3" viewBox="0 0 5 3"><path d="M0 0h5L2.500 2.800z" fill="#111"/></svg>
<svg class="a" style="left:1518.5px;top:559.5px;" width="14" height="12" viewBox="0 0 14 12"><g stroke="#22252e"><path d="M0 1.200h13" stroke-width="2.400"/><path d="M0 5h13" stroke-width="2"/><path d="M0 8.200h13" stroke-width="1.500"/><path d="M0 11h13" stroke-width="1"/></g></svg>
<div class="a t" style="left:1537.40px;top:555.65px;line-height:20px;font-size:15px;color:#33363f;letter-spacing:-0.234px;">Line thickness</div>
<div class="a" style="left:1663px;top:551.7px;width:158.4px;height:27px;background:#fff;border:1px solid #e4e4e6;border-radius:3px;box-sizing:border-box;"></div>
<div class="a" style="left:1806.5px;top:552.7px;width:14px;height:25px;background:#fafafa;border-left:1px solid #ececec;border-radius:0 3px 3px 0;box-sizing:border-box;"></div>
<div class="a" style="left:1807px;top:565.1px;width:13px;height:1px;background:#ececec;"></div>
<div class="a t" style="left:1795.16px;top:556.20px;line-height:20px;font-size:15px;color:#222;">3</div>
<svg class="a" style="left:1811.2px;top:557.0px;" width="4.6" height="2.8" viewBox="0 0 4.6 2.8"><path d="M0 2.800h4.600L2.300 0z" fill="#222"/></svg>
<svg class="a" style="left:1811.2px;top:570.4000000000001px;" width="4.6" height="2.8" viewBox="0 0 4.6 2.8"><path d="M0 0h4.600L2.300 2.800z" fill="#222"/></svg>
<div class="a" style="left:1829.8px;top:548px;width:35.8px;height:35.2px;background:#0b7b6c;border-radius:4.5px;"></div>
<svg class="a" style="left:1839.2px;top:557.1px;transform:scaleY(0.800);" width="17" height="17" viewBox="0 0 24 24"><path fill="#fff" d="M18.600 6.620c-1.440 0-2.800.560-3.770 1.530L12 10.660 10.480 12h.010L7.800 14.390c-.640.640-1.490.990-2.400.990-1.870 0-3.390-1.510-3.390-3.380S3.530 8.620 5.400 8.620c.910 0 1.760.350 2.440 1.030l1.130 1 1.510-1.340L9.220 8.200C8.200 7.180 6.840 6.620 5.400 6.620 2.420 6.620 0 9.040 0 12s2.420 5.380 5.400 5.380c1.440 0 2.800-.560 3.770-1.530l2.830-2.500.010.010L13.520 12h-.010l2.690-2.390c.640-.640 1.490-.990 2.400-.990 1.870 0 3.390 1.510 3.390 3.380s-1.520 3.380-3.390 3.380c-.9 0-1.760-.350-2.440-1.030l-1.140-1.010-1.510 1.340 1.270 1.120c1.020 1.010 2.370 1.570 3.820 1.570 2.980 0 5.400-2.410 5.400-5.380s-2.420-5.370-5.400-5.370z"/></svg>
<svg class="a" style="left:1518.5px;top:603px;" width="14" height="12" viewBox="0 0 14 12"><g stroke="#22252e"><path d="M0 1.200h13" stroke-width="2.400"/><path d="M0 5.200h13" stroke-width="2" stroke-dasharray="5.500 2"/><path d="M0 8.600h13" stroke-width="1.600" stroke-dasharray="3 2"/><path d="M0 11.200h13" stroke-width="1.200" stroke-dasharray="1.300 1.300"/></g></svg>
<div class="a t" style="left:1537.40px;top:599.55px;line-height:20px;font-size:15px;color:#33363f;letter-spacing:-0.020px;">Line pattern</div>
<div class="a" style="left:1663px;top:591.8px;width:158.4px;height:34.6px;background:#fff;border:1px solid #e4e4e6;border-radius:3px;box-sizing:border-box;"></div>
<div class="a t" style="left:1675.70px;top:597.64px;line-height:19px;font-size:14.5px;color:#2f4fd0;letter-spacing:-0.186px;">Solid</div>
<svg class="a" style="left:1797.6000000000001px;top:603.8999999999999px;" width="13" height="9" viewBox="0 0 13 9"><path d="M1.500 1.800L6.500 6.800 11.500 1.800" fill="none" stroke="#222" stroke-width="1.900"/></svg>
<div class="a" style="left:1829.8px;top:591.5px;width:35.8px;height:35.2px;background:#0b7b6c;border-radius:4.5px;"></div>
<svg class="a" style="left:1839.2px;top:600.6px;transform:scaleY(0.800);" width="17" height="17" viewBox="0 0 24 24"><path fill="#fff" d="M18.600 6.620c-1.440 0-2.800.560-3.770 1.530L12 10.660 10.480 12h.010L7.800 14.390c-.640.640-1.490.990-2.400.990-1.870 0-3.390-1.510-3.390-3.380S3.530 8.620 5.400 8.620c.910 0 1.760.350 2.440 1.030l1.130 1 1.510-1.340L9.220 8.200C8.200 7.180 6.840 6.620 5.400 6.620 2.420 6.620 0 9.040 0 12s2.420 5.380 5.400 5.380c1.440 0 2.800-.560 3.770-1.530l2.830-2.500.010.010L13.520 12h-.010l2.690-2.390c.640-.640 1.490-.990 2.400-.990 1.870 0 3.390 1.510 3.390 3.380s-1.520 3.380-3.390 3.380c-.9 0-1.760-.350-2.440-1.030l-1.140-1.010-1.510 1.340 1.270 1.120c1.020 1.010 2.370 1.570 3.820 1.570 2.980 0 5.400-2.410 5.400-5.380s-2.420-5.370-5.400-5.370z"/></svg>
<svg class="a" style="left:1517.55px;top:645.05px;" width="15.5" height="15.5" viewBox="0 0 24 24"><path fill="#22252e" d="M22 9.240l-7.190-.620L12 2 9.190 8.630 2 9.240l5.460 4.730L5.820 21 12 17.270 18.180 21l-1.630-7.030L22 9.240zM12 15.400l-3.760 2.270 1-4.280-3.320-2.880 4.380-.380L12 6.100l1.710 4.040 4.380.380-3.320 2.880 1 4.280L12 15.400z"/></svg>
<div class="a t" style="left:1537.40px;top:643.15px;line-height:20px;font-size:15px;color:#33363f;letter-spacing:-0.154px;">Symbol marker</div>
<div class="a" style="left:1663px;top:635.7px;width:158.4px;height:34.7px;background:#fff;border:1px solid #e4e4e6;border-radius:3px;box-sizing:border-box;"></div>
<div class="a t" style="left:1675.70px;top:641.59px;line-height:19px;font-size:14.5px;color:#2f4fd0;letter-spacing:-0.211px;">Circle</div>
<svg class="a" style="left:1797.6000000000001px;top:647.85px;" width="13" height="9" viewBox="0 0 13 9"><path d="M1.500 1.800L6.500 6.800 11.500 1.800" fill="none" stroke="#222" stroke-width="1.900"/></svg>
<div class="a" style="left:1829.8px;top:635.4px;width:35.8px;height:35.2px;background:#0b7b6c;border-radius:4.5px;"></div>
<svg class="a" style="left:1839.2px;top:644.5px;transform:scaleY(0.800);" width="17" height="17" viewBox="0 0 24 24"><path fill="#fff" d="M18.600 6.620c-1.440 0-2.800.560-3.770 1.530L12 10.660 10.480 12h.010L7.800 14.390c-.640.640-1.490.990-2.400.990-1.870 0-3.390-1.510-3.390-3.380S3.530 8.620 5.400 8.620c.910 0 1.760.350 2.440 1.030l1.130 1 1.510-1.340L9.220 8.200C8.200 7.180 6.840 6.620 5.400 6.620 2.420 6.620 0 9.040 0 12s2.420 5.380 5.400 5.380c1.440 0 2.800-.560 3.770-1.530l2.830-2.500.010.010L13.520 12h-.010l2.690-2.390c.640-.640 1.490-.990 2.400-.990 1.870 0 3.390 1.510 3.390 3.380s-1.520 3.380-3.390 3.380c-.9 0-1.760-.350-2.440-1.030l-1.140-1.010-1.510 1.340 1.270 1.120c1.020 1.010 2.370 1.570 3.820 1.570 2.980 0 5.400-2.410 5.400-5.380s-2.420-5.370-5.400-5.370z"/></svg>
<svg class="a" style="left:1517.3px;top:688.8px;" width="15" height="15" viewBox="0 0 24 24"><path fill="#22252e" d="M22 9.240l-7.190-.620L12 2 9.190 8.630 2 9.240l5.460 4.730L5.820 21 12 17.270 18.180 21l-1.630-7.030L22 9.240zM12 15.400l-3.760 2.270 1-4.280-3.320-2.880 4.380-.380L12 6.100l1.710 4.040 4.380.380-3.320 2.880 1 4.280L12 15.400z"/></svg>
<svg class="a" style="left:1527.8px;top:698.2px;" width="6" height="6" viewBox="0 0 6 6"><path d="M3 0v6M0 3h6" stroke="#22252e" stroke-width="1.300"/></svg>
<div class="a t" style="left:1537.40px;top:686.85px;line-height:20px;font-size:15px;color:#33363f;letter-spacing:-0.486px;">Symbol size</div>
<div class="a" style="left:1663px;top:683.7px;width:158.4px;height:27px;background:#fff;border:1px solid #e4e4e6;border-radius:3px;box-sizing:border-box;"></div>
<div class="a" style="left:1806.5px;top:684.7px;width:14px;height:25px;background:#fafafa;border-left:1px solid #ececec;border-radius:0 3px 3px 0;box-sizing:border-box;"></div>
<div class="a" style="left:1807px;top:697.1px;width:13px;height:1px;background:#ececec;"></div>
<div class="a t" style="left:1786.82px;top:688.20px;line-height:20px;font-size:15px;color:#222;">10</div>
<svg class="a" style="left:1811.2px;top:689.0px;" width="4.6" height="2.8" viewBox="0 0 4.6 2.8"><path d="M0 2.800h4.600L2.300 0z" fill="#222"/></svg>
<svg class="a" style="left:1811.2px;top:702.4000000000001px;" width="4.6" height="2.8" viewBox="0 0 4.6 2.8"><path d="M0 0h4.600L2.300 2.800z" fill="#222"/></svg>
<div class="a" style="left:1829.8px;top:679.1px;width:35.8px;height:35.2px;background:#0b7b6c;border-radius:4.5px;"></div>
<svg class="a" style="left:1839.2px;top:688.2px;transform:scaleY(0.800);" width="17" height="17" viewBox="0 0 24 24"><path fill="#fff" d="M18.600 6.620c-1.440 0-2.800.560-3.770 1.530L12 10.660 10.480 12h.010L7.800 14.390c-.640.640-1.490.990-2.400.990-1.870 0-3.390-1.510-3.390-3.380S3.530 8.620 5.400 8.620c.910 0 1.760.350 2.440 1.030l1.130 1 1.510-1.340L9.220 8.200C8.200 7.180 6.840 6.620 5.400 6.620 2.420 6.620 0 9.040 0 12s2.420 5.380 5.400 5.380c1.440 0 2.800-.560 3.770-1.530l2.830-2.500.010.010L13.520 12h-.010l2.690-2.390c.640-.640 1.490-.990 2.400-.990 1.870 0 3.390 1.510 3.390 3.380s-1.520 3.380-3.390 3.380c-.9 0-1.760-.350-2.440-1.030l-1.140-1.010-1.510 1.340 1.270 1.120c1.020 1.010 2.370 1.570 3.820 1.570 2.980 0 5.400-2.410 5.400-5.380s-2.420-5.370-5.400-5.370z"/></svg>
<svg class="a" style="left:1518.5px;top:733.5px;" width="14" height="14" viewBox="0 0 14 14"><rect x="0.500" y="0.500" width="13" height="13" rx="1.500" fill="#22252e"/><path d="M7 3l1.200 2.700 2.900.3-2.200 1.900.7 2.900L7 9.300 4.400 10.800l.7-2.900L2.900 6l2.900-.3z" fill="#fff"/></svg>
<div class="a t" style="left:1537.40px;top:730.55px;line-height:20px;font-size:15px;color:#33363f;letter-spacing:-0.247px;">Symbol thickness</div>
<div class="a" style="left:1663px;top:727px;width:158.4px;height:27px;background:#fff;border:1px solid #e4e4e6;border-radius:3px;box-sizing:border-box;"></div>
<div class="a" style="left:1806.5px;top:728px;width:14px;height:25px;background:#fafafa;border-left:1px solid #ececec;border-radius:0 3px 3px 0;box-sizing:border-box;"></div>
<div class="a" style="left:1807px;top:740.4px;width:13px;height:1px;background:#ececec;"></div>
<div class="a t" style="left:1795.16px;top:731.50px;line-height:20px;font-size:15px;color:#222;">3</div>
<svg class="a" style="left:1811.2px;top:732.3px;" width="4.6" height="2.8" viewBox="0 0 4.6 2.8"><path d="M0 2.800h4.600L2.300 0z" fill="#222"/></svg>
<svg class="a" style="left:1811.2px;top:745.7px;" width="4.6" height="2.8" viewBox="0 0 4.6 2.8"><path d="M0 0h4.600L2.300 2.800z" fill="#222"/></svg>
<div class="a" style="left:1829.8px;top:723px;width:35.8px;height:35.2px;background:#0b7b6c;border-radius:4.5px;"></div>
<svg class="a" style="left:1839.2px;top:732.1px;transform:scaleY(0.800);" width="17" height="17" viewBox="0 0 24 24"><path fill="#fff" d="M18.600 6.620c-1.440 0-2.800.560-3.770 1.530L12 10.660 10.480 12h.010L7.800 14.390c-.640.640-1.490.990-2.400.990-1.870 0-3.390-1.510-3.390-3.380S3.530 8.620 5.400 8.620c.910 0 1.760.350 2.440 1.030l1.130 1 1.510-1.340L9.220 8.200C8.200 7.180 6.840 6.620 5.400 6.620 2.420 6.620 0 9.040 0 12s2.420 5.380 5.400 5.380c1.440 0 2.800-.560 3.770-1.530l2.830-2.500.010.010L13.520 12h-.010l2.690-2.390c.640-.640 1.490-.990 2.400-.990 1.870 0 3.390 1.510 3.390 3.380s-1.520 3.380-3.390 3.380c-.9 0-1.760-.350-2.440-1.030l-1.140-1.010-1.510 1.340 1.270 1.120c1.020 1.010 2.370 1.570 3.820 1.570 2.980 0 5.400-2.410 5.400-5.380s-2.420-5.370-5.400-5.370z"/></svg>
<svg class="a" style="left:1518.5px;top:777px;" width="14" height="14" viewBox="0 0 14 14"><g fill="none" stroke="#22252e" stroke-width="1.400"><rect x="0.700" y="0.700" width="12.600" height="12.600" rx="1.200"/><path d="M0.700 5h12.600M0.700 9h12.600M5 0.700v12.600M9 0.700v12.600"/></g></svg>
<div class="a t" style="left:1537.40px;top:774.15px;line-height:20px;font-size:15px;color:#33363f;letter-spacing:-0.190px;">Grid axis display</div>
<div class="a" style="left:1663px;top:766.6px;width:158.4px;height:35px;background:#fff;border:1px solid #e4e4e6;border-radius:3px;box-sizing:border-box;"></div>
<div class="a t" style="left:1675.70px;top:772.64px;line-height:19px;font-size:14.5px;color:#2f4fd0;letter-spacing:0.279px;">None</div>
<svg class="a" style="left:1797.6000000000001px;top:778.9px;" width="13" height="9" viewBox="0 0 13 9"><path d="M1.500 1.800L6.500 6.800 11.500 1.800" fill="none" stroke="#222" stroke-width="1.900"/></svg>
<svg class="a" style="left:1519.5px;top:812.5px;" width="12" height="13" viewBox="0 0 12 13"><path d="M1 0v13M4.300 0v13M7.600 0v13M10.900 0v13" stroke="#22252e" stroke-width="1.500"/></svg>
<div class="a t" style="left:1537.40px;top:809.15px;line-height:20px;font-size:15px;color:#33363f;letter-spacing:-0.195px;">Show operations</div>
<svg class="a" style="left:1662.7px;top:811px;" width="18.3" height="18" viewBox="0 0 18.3 18"><rect width="18.300" height="18" rx="2.500" fill="#0b7b6c"/><path d="M3.800 9.400l3.800 3.800 7-7.600" fill="none" stroke="#fff" stroke-width="2"/></svg>
<div class="a" style="left:1611.7px;top:970px;width:296.5px;height:20px;background:#dcdcdc;border-top:1px solid #9a9a9a;border-left:1px solid #9a9a9a;box-sizing:border-box;"></div>
<div class="a t" style="left:1512.70px;top:974.50px;line-height:16px;font-size:12px;color:#1a1a1a;letter-spacing:-0.169px;">Series properties</div>
</body></html>
